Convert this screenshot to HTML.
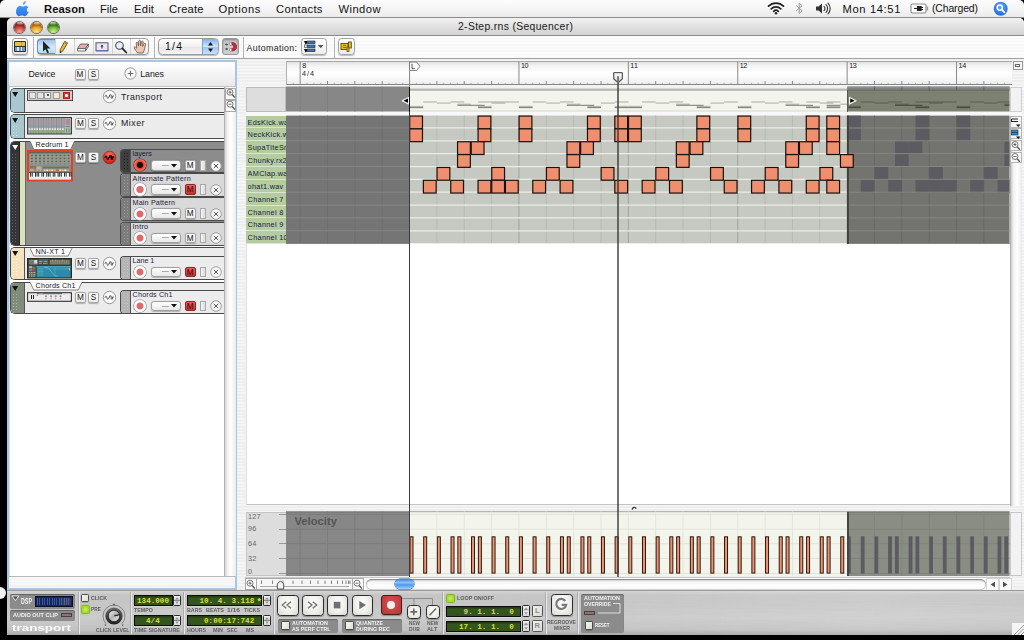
<!DOCTYPE html>
<html><head><meta charset="utf-8"><title>Reason</title><style>
html,body{margin:0;padding:0;}
body{width:1024px;height:640px;overflow:hidden;background:#000;position:relative;font-family:"Liberation Sans",sans-serif;}
#root{position:absolute;left:0;top:0;width:1024px;height:640px;overflow:hidden;}
.t{position:absolute;white-space:nowrap;}
.pin,#win{background:repeating-linear-gradient(#f5f5f5 0,#f5f5f5 1.600px,#eeeeee 1.600px,#eeeeee 3.200px);}
#menubar{position:absolute;left:0;top:0;width:1024px;height:17px;border-radius:5px 5px 0 0;background:linear-gradient(#fdfdfd 0,#f6f6f6 45%,#ebebeb 100%);border-bottom:1px solid #8c8c8c;}
#win{position:absolute;left:7px;top:18px;width:1017px;height:617px;border-radius:5px 5px 0 0;}
#titlebar{position:absolute;left:7px;top:18px;width:1017px;height:16.500px;border-radius:5px 5px 0 0;background:linear-gradient(#f2f2f2 0,#e4e4e4 40%,#d2d2d2 100%);border-bottom:1px solid #8a8a8a;box-sizing:content-box;}
#toolbar{position:absolute;left:7px;top:35.500px;width:1017px;height:22.500px;background:repeating-linear-gradient(#fcfcfc 0,#fcfcfc 1.600px,#f7f7f7 1.600px,#f7f7f7 3.200px);border-bottom:1px solid #a4a4a4;}
#tp{position:absolute;left:7px;top:591px;width:1017px;height:44px;background:linear-gradient(90deg,rgba(255,255,255,0) 55%,rgba(255,255,255,.130) 85%,rgba(255,255,255,.060) 100%),linear-gradient(#d8d8d8 0,#c6c6c6 9%,#c7c7c7 30%,#cdcdcd 60%,#c3c3c3 88%,#a6a6a6 100%);overflow:hidden;}
</style></head><body><div id="root">
<div id="menubar"></div>
<svg style="position:absolute;left:15.600px;top:0.5px" width="14" height="16" viewBox="0 0 14 16">
<defs><linearGradient id="ag" x1="0" y1="0" x2="0" y2="1"><stop offset="0" stop-color="#6ab2fa"/><stop offset="0.5" stop-color="#3b8cf2"/><stop offset="1" stop-color="#2a74e4"/></linearGradient></defs>
<path fill="url(#ag)" d="M9.3 0.4c.1 1-.3 1.9-.9 2.6-.6.7-1.500 1.200-2.400 1.100-.1-.9.400-1.900.900-2.500C7.500.9 8.500.4 9.300.4zM12.400 10.900c-.4 1-.7 1.400-1.200 2.200-.8 1.100-1.800 2.500-3.100 2.500-1.200 0-1.500-.7-3-.7s-1.900.700-3.000.700c-1.300 0-2.300-1.300-3.000-2.400C-2.000 10.000-.100 5.200 2.900 5.000c1.200 0 2 .8 3.100.8 1 0 1.600-.8 3.100-.8 1.100 0 2.300.6 3.100 1.600-2.700 1.500-2.300 5.400.200 4.300z" transform="translate(1.200,-0.300) scale(0.930,1.000)"/></svg>
<div class="t" style="left:44.00px;top:1.52px;font-size:11.20px;line-height:15px;color:#111;letter-spacing:0.108px;font-weight:bold;">Reason</div>
<div class="t" style="left:100.00px;top:1.52px;font-size:11.20px;line-height:15px;color:#111;letter-spacing:-0.016px;">File</div>
<div class="t" style="left:134.00px;top:1.52px;font-size:11.20px;line-height:15px;color:#111;letter-spacing:0.233px;">Edit</div>
<div class="t" style="left:169.00px;top:1.52px;font-size:11.20px;line-height:15px;color:#111;letter-spacing:0.177px;">Create</div>
<div class="t" style="left:218.50px;top:1.52px;font-size:11.20px;line-height:15px;color:#111;letter-spacing:0.567px;">Options</div>
<div class="t" style="left:276.00px;top:1.52px;font-size:11.20px;line-height:15px;color:#111;letter-spacing:0.329px;">Contacts</div>
<div class="t" style="left:338.50px;top:1.52px;font-size:11.20px;line-height:15px;color:#111;letter-spacing:0.433px;">Window</div>
<div class="t" style="left:842.50px;top:1.52px;font-size:11.20px;line-height:15px;color:#111;letter-spacing:0.634px;">Mon 14:51</div>
<div class="t" style="left:932.00px;top:2.00px;font-size:10.40px;line-height:14px;color:#111;letter-spacing:-0.103px;">(Charged)</div>
<svg style="position:absolute;left:767px;top:1px" width="18" height="14" viewBox="0 0 18 14"><g fill="none" stroke="#222" stroke-width="1.700" stroke-linecap="round"><path d="M1.500 5.200a10.500 10.500 0 0 1 15 0"/><path d="M4.200 7.900a6.800 6.800 0 0 1 9.600 0"/><path d="M6.700 10.300a3.300 3.300 0 0 1 4.600 0"/></g><circle cx="9" cy="12.200" r="1.200" fill="#222"/></svg>
<svg style="position:absolute;left:795px;top:2px" width="9" height="13" viewBox="0 0 9 13"><path d="M1.200 3.600l6 5.200-3 2.700V1l3 2.700-6 5.200" fill="none" stroke="#9a9a9a" stroke-width="1"/></svg>
<svg style="position:absolute;left:815px;top:2px" width="17" height="13" viewBox="0 0 17 13"><path d="M1 4.500h2.500L7 1.500v10L3.500 8.500H1z" fill="#333"/><g fill="none" stroke="#333" stroke-width="1.100" stroke-linecap="round"><path d="M9 4.300a3 3 0 0 1 0 4.400"/><path d="M11 2.700a5.300 5.300 0 0 1 0 7.600"/><path d="M13 1.200a7.500 7.500 0 0 1 0 10.600"/></g></svg>
<svg style="position:absolute;left:910px;top:3px" width="19" height="11" viewBox="0 0 19 11"><rect x="1" y="1" width="15" height="9" rx="1.500" fill="#fff" stroke="#8a8a8a" stroke-width="1.100"/><rect x="16.500" y="3.500" width="1.700" height="4" fill="#9a9a9a"/><path d="M4 5.500h3.500M7.500 3.500h3.500v4H7.500zM11 4.500h2M11 6.500h2" stroke="#222" stroke-width="1.200" fill="#222"/></svg>
<svg style="position:absolute;left:993px;top:1px" width="16" height="16" viewBox="0 0 16 16"><defs><radialGradient id="sg" cx="0.5" cy="0.350" r="0.700"><stop offset="0" stop-color="#5fa8ff"/><stop offset="1" stop-color="#1c62dc"/></radialGradient></defs><circle cx="7.700" cy="7.700" r="7" fill="url(#sg)"/><circle cx="6.800" cy="6.600" r="2.600" fill="none" stroke="#fff" stroke-width="1.500"/><path d="M8.800 8.700l2.600 2.700" stroke="#fff" stroke-width="1.800" stroke-linecap="round"/></svg>
<div id="win"></div>
<div id="titlebar"></div>
<div style="position:absolute;left:14.00px;top:21.50px;width:11.00px;height:11.00px;border-radius:50%;background:radial-gradient(ellipse 70% 60% at 50% 88%,#f4a8a0 0%,#c8453c 70%,#8e2a24 100%);box-shadow:0 0 0 0.900px rgba(70,70,70,.800);"><div style="position:absolute;left:2.500px;top:0.600px;width:6px;height:3.200px;border-radius:50%;background:linear-gradient(rgba(255,255,255,.800),rgba(255,255,255,.050))"></div></div>
<div style="position:absolute;left:31.00px;top:21.50px;width:11.00px;height:11.00px;border-radius:50%;background:radial-gradient(ellipse 70% 60% at 50% 88%,#fde68a 0%,#e8a224 70%,#b06a10 100%);box-shadow:0 0 0 0.900px rgba(70,70,70,.800);"><div style="position:absolute;left:2.500px;top:0.600px;width:6px;height:3.200px;border-radius:50%;background:linear-gradient(rgba(255,255,255,.800),rgba(255,255,255,.050))"></div></div>
<div style="position:absolute;left:47.50px;top:21.50px;width:11.00px;height:11.00px;border-radius:50%;background:radial-gradient(ellipse 70% 60% at 50% 88%,#d2f09a 0%,#6cb832 70%,#3e7a18 100%);box-shadow:0 0 0 0.900px rgba(70,70,70,.800);"><div style="position:absolute;left:2.500px;top:0.600px;width:6px;height:3.200px;border-radius:50%;background:linear-gradient(rgba(255,255,255,.800),rgba(255,255,255,.050))"></div></div>
<div class="t" style="left:458.00px;top:20.00px;font-size:10.40px;line-height:14px;color:#1a1a1a;letter-spacing:0.328px;">2-Step.rns (Sequencer)</div>
<div id="toolbar"></div>
<div style="position:absolute;left:0;top:-0.300px;width:0;height:0">
<div style="position:absolute;left:11.50px;top:38.50px;width:16.00px;height:16.50px;border-radius:3px;border:1px solid #9c9c9c;background:linear-gradient(#fff,#e6e6e6);box-sizing:border-box;box-shadow:0 1px 1px rgba(0,0,0,.250);"></div>
<div style="position:absolute;left:13.50px;top:41.00px;width:12.00px;height:11.00px;background:#2e2e2e;border-radius:1px;"></div>
<div style="position:absolute;left:14.50px;top:42.00px;width:10.00px;height:4.00px;background:linear-gradient(90deg,#e8c040 60%,#c8a030 60%,#c8a030 75%,#e8c040 75%);"></div>
<div style="position:absolute;left:14.50px;top:47.00px;width:10.00px;height:4.00px;background:linear-gradient(90deg,#6a98c4 25%,#dde 25%,#dde 40%,#6a98c4 40%,#6a98c4 60%,#dde 60%,#dde 75%,#6a98c4 75%);"></div>
<div style="position:absolute;left:32.50px;top:37.00px;width:1.00px;height:21.00px;background:#b4b4b4;"></div>
<div style="position:absolute;left:36.50px;top:38.50px;width:112.50px;height:16.50px;border-radius:4px;border:1px solid #9c9c9c;background:linear-gradient(#fff,#ececec);box-sizing:border-box;box-shadow:0 1px 1px rgba(0,0,0,.2);"></div>
<div style="position:absolute;left:37.00px;top:39.00px;width:17.50px;height:15.50px;border-radius:3.500px 0 0 3.500px;background:linear-gradient(#9cc4f2,#d6e8fb 55%,#b8d6f6);border:1px solid #6a8fd0;border-right:none;box-sizing:border-box;"></div>
<div style="position:absolute;left:54.50px;top:39.50px;width:1.00px;height:14.50px;background:#d4d4d4;"></div>
<div style="position:absolute;left:73.50px;top:39.50px;width:1.00px;height:14.50px;background:#d4d4d4;"></div>
<div style="position:absolute;left:92.50px;top:39.50px;width:1.00px;height:14.50px;background:#d4d4d4;"></div>
<div style="position:absolute;left:111.50px;top:39.50px;width:1.00px;height:14.50px;background:#d4d4d4;"></div>
<div style="position:absolute;left:130.00px;top:39.50px;width:1.00px;height:14.50px;background:#d4d4d4;"></div>
<svg style="position:absolute;left:41px;top:40px" width="12" height="14" viewBox="0 0 12 14"><path d="M2 1l7.500 7.500H6l2 4-1.600.8-2-4L2 11.500z" fill="#222"/></svg>
<svg style="position:absolute;left:58px;top:40px" width="12" height="14" viewBox="0 0 12 14"><path d="M6.800 1.300l2.800 1.600-4.700 8-2.800 1.900.200-3.400z" fill="#e6c034" stroke="#4a3a10" stroke-width=".8" stroke-linejoin="round"/><path d="M6.800 1.300l2.800 1.600-.9 1.500-2.800-1.600z" fill="#b47c50"/><path d="M2.100 12.800l.1-1.700 1.300.8z" fill="#222"/></svg>
<svg style="position:absolute;left:76px;top:41px" width="14" height="12" viewBox="0 0 14 12"><path d="M1.500 7.500l3-4.500h8l-3 4.500z" fill="#e8a8b0" stroke="#555" stroke-width=".8"/><path d="M1.500 7.500h8v2.500h-8z" fill="#f4f4f4" stroke="#555" stroke-width=".8"/><path d="M9.500 7.500l3-4.500v2.500l-3 4.500z" fill="#ccc" stroke="#555" stroke-width=".8"/></svg>
<svg style="position:absolute;left:95px;top:41px" width="14" height="12" viewBox="0 0 14 12"><rect x="1" y="1.800" width="12" height="8" fill="#e8e8f4" stroke="#556" stroke-width="1"/><path d="M1 9.800h12" stroke="#6a6ac0" stroke-width="1"/><path d="M7 3.500l1.500 2H5.500z M6.500 5.500h1v2h-1z" fill="#223"/></svg>
<svg style="position:absolute;left:114px;top:40px" width="14" height="14" viewBox="0 0 14 14"><circle cx="5.500" cy="5.500" r="3.800" fill="#e8f0ff" stroke="#445" stroke-width="1.100"/><path d="M8.300 8.300l4 4.200" stroke="#223" stroke-width="1.800" stroke-linecap="round"/></svg>
<svg style="position:absolute;left:132.500px;top:39px" width="15" height="15" viewBox="0 0 15 15"><path d="M4.500 14C3.500 12 1.500 10.500 1 8.500 1.500 7.500 2.800 8 3.800 9.200L3.200 4.200C3.200 3 4.800 3 5 4.200L5.600 7V2.200C5.800 1 7.300 1 7.400 2.200L7.600 6.800 8.600 2.600C9 1.500 10.400 1.900 10.200 3.100L9.600 7.400 11.200 4.600C11.800 3.700 13 4.300 12.600 5.400 11.600 8.500 11.800 11 10 14Z" fill="#eac8b4" stroke="#6a5044" stroke-width=".8" stroke-linejoin="round"/></svg>
<div style="position:absolute;left:153.50px;top:37.00px;width:1.00px;height:21.00px;background:#b4b4b4;"></div>
<div style="position:absolute;left:157.50px;top:38.50px;width:61.00px;height:16.50px;border-radius:4.500px;border:1px solid #9a9a9a;background:linear-gradient(#fff,#f0f0f0 50%,#e4e4e4 51%,#f4f4f4);box-sizing:border-box;box-shadow:0 1px 1px rgba(0,0,0,.250);"></div>
<div style="position:absolute;left:202.00px;top:39.00px;width:16.00px;height:15.50px;border-radius:0 4px 4px 0;background:linear-gradient(#7fb0ee,#cfe3fa 50%,#9dc5f4 52%,#c8e0fb);border-left:1px solid #7da0d8;box-sizing:border-box;"></div>
<svg style="position:absolute;left:207px;top:41px" width="7" height="12" viewBox="0 0 7 12"><path d="M3.500 1l2.500 3.500H1zM3.500 11L1 7.500h5z" fill="#111"/></svg>
<div class="t" style="left:165.00px;top:40.00px;font-size:10.40px;line-height:14px;color:#111;letter-spacing:1.271px;">1/4</div>
<div style="position:absolute;left:222.00px;top:38.50px;width:16.50px;height:16.50px;border-radius:3px;border:1px solid #999;background:linear-gradient(#c2c2c2,#d2d2d2);box-sizing:border-box;box-shadow:inset 0 1px 2px rgba(0,0,0,.3);"></div>
<svg style="position:absolute;left:224px;top:41px" width="13" height="12" viewBox="0 0 13 12"><path d="M6 1.500h2.500a4.200 4.200 0 0 1 0 8.500H6V7.500h2.300a1.800 1.800 0 0 0 0-3.500H6z" fill="#c8283c" stroke="#601020" stroke-width=".5"/><path d="M6 1.500h1.500V4H6zM6 7.500h1.500V10H6z" fill="#eee"/><path d="M1 3.500h3M1 8h3M2 2.500l1.500 1-1.500 1M2 7l1.500 1-1.500 1" stroke="#444" stroke-width=".8" fill="none"/></svg>
<div style="position:absolute;left:243.00px;top:37.00px;width:1.00px;height:21.00px;background:#b4b4b4;"></div>
<div class="t" style="left:246.50px;top:42.85px;font-size:8.80px;line-height:11px;color:#1a1a2a;letter-spacing:0.354px;">Automation:</div>
<div style="position:absolute;left:300.50px;top:38.50px;width:26.50px;height:16.50px;border-radius:3.500px;border:1px solid #a4a4a4;background:linear-gradient(#fff,#ececec);box-sizing:border-box;box-shadow:0 1px 1px rgba(0,0,0,.250);"></div>
<svg style="position:absolute;left:303px;top:40.500px" width="22" height="13" viewBox="0 0 22 13"><g fill="#3a78b8" stroke="#123" stroke-width=".6"><rect x="4.500" y="1" width="7.500" height="2.600"/><rect x="4.500" y="5" width="7.500" height="2.600"/><rect x="4.500" y="9" width="7.500" height="2.600"/></g><path d="M1 1h3v2.500l-1.500 1zM1 9h3v2.500l-1.500 1z" fill="#111"/><rect x="1.500" y="5" width="2.500" height="2.600" fill="#fff" stroke="#333" stroke-width=".6"/><path d="M15 5h5.500l-2.750 3.200z" fill="#555"/></svg>
<div style="position:absolute;left:333.50px;top:37.00px;width:1.00px;height:21.00px;background:#b4b4b4;"></div>
<div style="position:absolute;left:338.00px;top:38.50px;width:16.50px;height:16.50px;border-radius:3.500px;border:1px solid #a4a4a4;background:linear-gradient(#fff,#ececec);box-sizing:border-box;box-shadow:0 1px 1px rgba(0,0,0,.250);"></div>
<svg style="position:absolute;left:340px;top:41px" width="13" height="12" viewBox="0 0 13 12"><rect x="1" y="2.500" width="7" height="6" fill="#e8c030" stroke="#5a4a10" stroke-width=".9"/><rect x="8.500" y="1" width="2.800" height="6" fill="#e8c030" stroke="#5a4a10" stroke-width=".9"/><rect x="7" y="6" width="2" height="4.500" fill="#e8c030" stroke="#5a4a10" stroke-width=".8"/><path d="M3 4.500h3M3 6.500h3" stroke="#5a4a10" stroke-width=".7"/></svg>
</div>
<div style="position:absolute;left:7.20px;top:60.20px;width:230.30px;height:529.80px;box-sizing:border-box;border:2px solid #a7c6e6;background:#fff;box-shadow:inset 0 0 0 1px #d5e3f2;"></div>
<div style="position:absolute;left:9.20px;top:62.00px;width:226.30px;height:24.50px;background:linear-gradient(#ffffff,#f4f4f4 50%,#e9e9e9);border-bottom:1px solid #c4c4c4;box-sizing:border-box;"></div>
<div class="t" style="left:28.50px;top:69.45px;font-size:8.80px;line-height:11px;color:#1a1a1a;letter-spacing:0.020px;">Device</div>
<div style="position:absolute;left:74.50px;top:68.50px;width:11.00px;height:11.00px;border-radius:2px;border:1px solid #a6a6a6;background:linear-gradient(#ffffff,#ececec);box-sizing:border-box;box-shadow:0 .5px 1px rgba(0,0,0,.250);"><div style="position:absolute;left:0;right:0;top:0;bottom:0;text-align:center;font-size:8.2px;line-height:9.8px;color:#111;">M</div></div>
<div style="position:absolute;left:88.00px;top:68.50px;width:11.00px;height:11.00px;border-radius:2px;border:1px solid #a6a6a6;background:linear-gradient(#ffffff,#ececec);box-sizing:border-box;box-shadow:0 .5px 1px rgba(0,0,0,.250);"><div style="position:absolute;left:0;right:0;top:0;bottom:0;text-align:center;font-size:8.2px;line-height:9.8px;color:#111;">S</div></div>
<svg style="position:absolute;left:123.500px;top:67px" width="13" height="13" viewBox="0 0 13 13"><circle cx="6.500" cy="6.500" r="5.600" fill="#fbfbfb" stroke="#8c8c8c" stroke-width=".9"/><path d="M6.500 3.700v5.600M3.700 6.500h5.600" stroke="#666" stroke-width="1.100"/></svg>
<div class="t" style="left:140.30px;top:69.45px;font-size:8.80px;line-height:11px;color:#1a1a1a;letter-spacing:-0.069px;">Lanes</div>
<div style="position:absolute;left:224.00px;top:87.00px;width:12.00px;height:489.00px;background:linear-gradient(90deg,#d4d4d4 0,#f4f4f4 25%,#ffffff 55%,#ececec 100%);border-left:1px solid #b0b0b0;box-sizing:border-box;"></div>
<div style="position:absolute;left:224.50px;top:87.50px;width:11.00px;height:12.00px;background:#f8f8f8;border:1px solid #aaa;box-sizing:border-box;"></div>
<svg style="position:absolute;left:225.500px;top:88.0px" width="10" height="11" viewBox="0 0 10 11"><circle cx="4" cy="4.200" r="3" fill="#fff" stroke="#555" stroke-width=".8"/><path d="M6.200 6.500l2.600 3" stroke="#555" stroke-width="1.300"/><path d="M2.500 4.200h3M4 2.700v3" stroke="#444" stroke-width=".8"/></svg>
<div style="position:absolute;left:224.50px;top:99.50px;width:11.00px;height:12.00px;background:#f8f8f8;border:1px solid #aaa;box-sizing:border-box;"></div>
<svg style="position:absolute;left:225.500px;top:100.0px" width="10" height="11" viewBox="0 0 10 11"><circle cx="4" cy="4.200" r="3" fill="#fff" stroke="#555" stroke-width=".8"/><path d="M6.200 6.500l2.600 3" stroke="#555" stroke-width="1.300"/><path d="M2.500 4.200h3" stroke="#444" stroke-width=".8"/></svg>
<div style="position:absolute;left:9.20px;top:576.00px;width:226.30px;height:12.00px;border-top:1px solid #b8b8b8;box-sizing:border-box;background:repeating-linear-gradient(#f8f8f8 0,#f8f8f8 1.600px,#f2f2f2 1.600px,#f2f2f2 3.200px);"></div>
<div style="position:absolute;left:9.60px;top:88.00px;width:214.40px;height:24.50px;box-sizing:border-box;border:1px solid #484848;border-right:none;border-radius:5px 0 0 5px;background:#ececec;overflow:hidden;"><div style="position:absolute;left:0;top:0;bottom:0;width:13px;background:#a8c7ce;border-right:1px solid #555;"></div></div>
<svg style="position:absolute;left:11.9px;top:92.1px" width="7" height="6" viewBox="0 0 7 6"><path d="M0.200 0h6L3.200 4.900z" fill="#111"/></svg>
<div style="position:absolute;left:27.00px;top:90.00px;width:45.50px;height:10.50px;background:#cfcfcf;border:1px solid #4a4a4a;box-sizing:border-box;"></div>
<div style="position:absolute;left:29.00px;top:91.80px;width:7.00px;height:7.00px;background:#e4e4e4;border:1px solid #9a9a9a;box-sizing:border-box;"></div>
<div style="position:absolute;left:36.70px;top:91.80px;width:7.00px;height:7.00px;background:#e4e4e4;border:1px solid #9a9a9a;box-sizing:border-box;"></div>
<div style="position:absolute;left:44.40px;top:91.80px;width:7.00px;height:7.00px;background:#ececec;border:1px solid #9a9a9a;box-sizing:border-box;"></div>
<div style="position:absolute;left:52.60px;top:91.80px;width:7.00px;height:7.00px;background:#f6ecc6;border:1px solid #9a9a9a;box-sizing:border-box;"></div>
<div style="position:absolute;left:62.80px;top:91.80px;width:7.00px;height:7.00px;background:#e83a28;border:1px solid #b02010;box-sizing:border-box;"></div>
<div style="position:absolute;left:65.10px;top:94.10px;width:2.50px;height:2.50px;background:#fff;border-radius:50%;"></div>
<div style="position:absolute;left:46.90px;top:94.30px;width:2.00px;height:2.00px;background:#555;"></div>
<svg style="position:absolute;left:101.5px;top:88.5px" width="15" height="15" viewBox="0 0 15 15"><circle cx="7.500" cy="7.500" r="6.200" fill="#fbfbfb" stroke="#8c8c8c" stroke-width=".9"/><path d="M3 8C3.500 5.400 4.500 5.400 5 8 5.400 10.100 6.300 10.100 6.800 7.600H7.600V5.900H9.200V9.100H10.500V7H12" fill="none" stroke="#555" stroke-width=".9"/></svg>
<div class="t" style="left:121.00px;top:92.05px;font-size:8.80px;line-height:11px;color:#1a1a2a;letter-spacing:0.458px;">Transport</div>
<div style="position:absolute;left:9.60px;top:114.00px;width:214.40px;height:24.50px;box-sizing:border-box;border:1px solid #484848;border-right:none;border-radius:5px 0 0 5px;background:#ececec;overflow:hidden;"><div style="position:absolute;left:0;top:0;bottom:0;width:13px;background:#a8c7ce;border-right:1px solid #555;"></div></div>
<svg style="position:absolute;left:11.9px;top:118.2px" width="7" height="6" viewBox="0 0 7 6"><path d="M0.200 0h6L3.200 4.900z" fill="#111"/></svg>
<div style="position:absolute;left:12.20px;top:125.00px;width:6.00px;height:11.00px;background-image:radial-gradient(circle,rgba(255,255,255,.450) 0.700px,transparent 1px);background-size:3px 3px;"></div>
<svg style="position:absolute;left:27px;top:117px" width="45" height="17.5" viewBox="0 0 45 17.5"><rect x=".5" y=".5" width="44" height="16.5" fill="#868c92" stroke="#3c4044" stroke-width="1"/><rect x="1.70" y="1.200" width="1.700" height="15" fill="#a6acb2"/><rect x="1.90" y="2" width="1.300" height="4.800" fill="#b39494" opacity=".8"/><rect x="1.90" y="7.500" width="1.300" height="3" fill="#8e98a6" opacity=".9"/><rect x="1.70" y="11.300" width="1.700" height="1.800" fill="#e6e8e6"/><rect x="2.00" y="13.100" width="1.100" height="2.800" fill="#7cb858" opacity=".85"/><rect x="4.26" y="1.200" width="1.700" height="15" fill="#a6acb2"/><rect x="4.46" y="2" width="1.300" height="4.800" fill="#b39494" opacity=".8"/><rect x="4.46" y="7.500" width="1.300" height="3" fill="#8e98a6" opacity=".9"/><rect x="4.26" y="11.300" width="1.700" height="1.800" fill="#e6e8e6"/><rect x="4.56" y="13.100" width="1.100" height="2.800" fill="#7cb858" opacity=".85"/><rect x="6.82" y="1.200" width="1.700" height="15" fill="#a6acb2"/><rect x="7.02" y="2" width="1.300" height="4.800" fill="#b39494" opacity=".8"/><rect x="7.02" y="7.500" width="1.300" height="3" fill="#8e98a6" opacity=".9"/><rect x="6.82" y="11.300" width="1.700" height="1.800" fill="#e6e8e6"/><rect x="7.12" y="13.100" width="1.100" height="2.800" fill="#7cb858" opacity=".85"/><rect x="9.38" y="1.200" width="1.700" height="15" fill="#a6acb2"/><rect x="9.58" y="2" width="1.300" height="4.800" fill="#b39494" opacity=".8"/><rect x="9.58" y="7.500" width="1.300" height="3" fill="#8e98a6" opacity=".9"/><rect x="9.38" y="11.300" width="1.700" height="1.800" fill="#e6e8e6"/><rect x="9.68" y="13.100" width="1.100" height="2.800" fill="#7cb858" opacity=".85"/><rect x="11.94" y="1.200" width="1.700" height="15" fill="#a6acb2"/><rect x="12.14" y="2" width="1.300" height="4.800" fill="#b39494" opacity=".8"/><rect x="12.14" y="7.500" width="1.300" height="3" fill="#8e98a6" opacity=".9"/><rect x="11.94" y="11.300" width="1.700" height="1.800" fill="#e6e8e6"/><rect x="12.24" y="13.100" width="1.100" height="2.800" fill="#7cb858" opacity=".85"/><rect x="14.50" y="1.200" width="1.700" height="15" fill="#a6acb2"/><rect x="14.70" y="2" width="1.300" height="4.800" fill="#b39494" opacity=".8"/><rect x="14.70" y="7.500" width="1.300" height="3" fill="#8e98a6" opacity=".9"/><rect x="14.50" y="11.300" width="1.700" height="1.800" fill="#e6e8e6"/><rect x="14.80" y="13.100" width="1.100" height="2.800" fill="#7cb858" opacity=".85"/><rect x="17.06" y="1.200" width="1.700" height="15" fill="#a6acb2"/><rect x="17.26" y="2" width="1.300" height="4.800" fill="#b39494" opacity=".8"/><rect x="17.26" y="7.500" width="1.300" height="3" fill="#8e98a6" opacity=".9"/><rect x="17.06" y="11.300" width="1.700" height="1.800" fill="#e6e8e6"/><rect x="17.36" y="13.100" width="1.100" height="2.800" fill="#7cb858" opacity=".85"/><rect x="19.62" y="1.200" width="1.700" height="15" fill="#a6acb2"/><rect x="19.82" y="2" width="1.300" height="4.800" fill="#b39494" opacity=".8"/><rect x="19.82" y="7.500" width="1.300" height="3" fill="#8e98a6" opacity=".9"/><rect x="19.62" y="11.300" width="1.700" height="1.800" fill="#e6e8e6"/><rect x="19.92" y="13.100" width="1.100" height="2.800" fill="#7cb858" opacity=".85"/><rect x="22.18" y="1.200" width="1.700" height="15" fill="#a6acb2"/><rect x="22.38" y="2" width="1.300" height="4.800" fill="#b39494" opacity=".8"/><rect x="22.38" y="7.500" width="1.300" height="3" fill="#8e98a6" opacity=".9"/><rect x="22.18" y="11.300" width="1.700" height="1.800" fill="#e6e8e6"/><rect x="22.48" y="13.100" width="1.100" height="2.800" fill="#7cb858" opacity=".85"/><rect x="24.74" y="1.200" width="1.700" height="15" fill="#a6acb2"/><rect x="24.94" y="2" width="1.300" height="4.800" fill="#b39494" opacity=".8"/><rect x="24.94" y="7.500" width="1.300" height="3" fill="#8e98a6" opacity=".9"/><rect x="24.74" y="11.300" width="1.700" height="1.800" fill="#e6e8e6"/><rect x="25.04" y="13.100" width="1.100" height="2.800" fill="#7cb858" opacity=".85"/><rect x="27.30" y="1.200" width="1.700" height="15" fill="#a6acb2"/><rect x="27.50" y="2" width="1.300" height="4.800" fill="#b39494" opacity=".8"/><rect x="27.50" y="7.500" width="1.300" height="3" fill="#8e98a6" opacity=".9"/><rect x="27.30" y="11.300" width="1.700" height="1.800" fill="#e6e8e6"/><rect x="27.60" y="13.100" width="1.100" height="2.800" fill="#7cb858" opacity=".85"/><rect x="29.86" y="1.200" width="1.700" height="15" fill="#a6acb2"/><rect x="30.06" y="2" width="1.300" height="4.800" fill="#b39494" opacity=".8"/><rect x="30.06" y="7.500" width="1.300" height="3" fill="#8e98a6" opacity=".9"/><rect x="29.86" y="11.300" width="1.700" height="1.800" fill="#e6e8e6"/><rect x="30.16" y="13.100" width="1.100" height="2.800" fill="#7cb858" opacity=".85"/><rect x="32.42" y="1.200" width="1.700" height="15" fill="#a6acb2"/><rect x="32.62" y="2" width="1.300" height="4.800" fill="#b39494" opacity=".8"/><rect x="32.62" y="7.500" width="1.300" height="3" fill="#8e98a6" opacity=".9"/><rect x="32.42" y="11.300" width="1.700" height="1.800" fill="#e6e8e6"/><rect x="32.72" y="13.100" width="1.100" height="2.800" fill="#7cb858" opacity=".85"/><rect x="34.98" y="1.200" width="1.700" height="15" fill="#a6acb2"/><rect x="35.18" y="2" width="1.300" height="4.800" fill="#b39494" opacity=".8"/><rect x="35.18" y="7.500" width="1.300" height="3" fill="#8e98a6" opacity=".9"/><rect x="34.98" y="11.300" width="1.700" height="1.800" fill="#e6e8e6"/><rect x="35.28" y="13.100" width="1.100" height="2.800" fill="#7cb858" opacity=".85"/><rect x="37.600" y="1.200" width="6.200" height="15" fill="#b4b8bc"/><path d="M38.500 3h4.500M38.500 5h4.500M38.500 7h4.500" stroke="#a85858" stroke-width=".9"/><path d="M38.500 9.500h4.500" stroke="#666" stroke-width=".8"/><rect x="39" y="11.500" width="1.200" height="4.200" fill="#58a838"/><rect x="41.500" y="11.500" width="1.200" height="4.200" fill="#58a838"/></svg>
<div style="position:absolute;left:75.00px;top:117.50px;width:11.00px;height:11.00px;border-radius:2px;border:1px solid #a6a6a6;background:linear-gradient(#ffffff,#ececec);box-sizing:border-box;box-shadow:0 .5px 1px rgba(0,0,0,.250);"><div style="position:absolute;left:0;right:0;top:0;bottom:0;text-align:center;font-size:8.2px;line-height:9.8px;color:#111;">M</div></div>
<div style="position:absolute;left:88.00px;top:117.50px;width:11.00px;height:11.00px;border-radius:2px;border:1px solid #a6a6a6;background:linear-gradient(#ffffff,#ececec);box-sizing:border-box;box-shadow:0 .5px 1px rgba(0,0,0,.250);"><div style="position:absolute;left:0;right:0;top:0;bottom:0;text-align:center;font-size:8.2px;line-height:9.8px;color:#111;">S</div></div>
<svg style="position:absolute;left:101.5px;top:116.0px" width="15" height="15" viewBox="0 0 15 15"><circle cx="7.500" cy="7.500" r="6.200" fill="#fbfbfb" stroke="#8c8c8c" stroke-width=".9"/><path d="M3 8C3.500 5.400 4.500 5.400 5 8 5.400 10.100 6.300 10.100 6.800 7.600H7.600V5.900H9.200V9.100H10.500V7H12" fill="none" stroke="#555" stroke-width=".9"/></svg>
<div class="t" style="left:121.00px;top:118.15px;font-size:8.80px;line-height:11px;color:#1a1a2a;letter-spacing:0.497px;">Mixer</div>
<div style="position:absolute;left:9.60px;top:140.50px;width:214.40px;height:105.00px;box-sizing:border-box;border:1px solid #484848;border-right:none;border-radius:5px 0 0 5px;background:#8c8c8c;overflow:hidden;"><div style="position:absolute;left:0;top:0;bottom:0;width:8.500px;background:#353535;"></div><div style="position:absolute;left:8.500px;top:0;bottom:0;width:4.500px;background:#d9e2bd;border-right:1px solid #666;border-left:1px solid #222"></div></div>
<svg style="position:absolute;left:11.9px;top:144.7px" width="7" height="6" viewBox="0 0 7 6"><path d="M0.200 0h6L3.200 4.900z" fill="#fff"/></svg>
<div style="position:absolute;left:11.40px;top:153.00px;width:6.00px;height:90.00px;background-image:radial-gradient(circle,rgba(255,255,255,.220) 0.700px,transparent 1px);background-size:3px 3px;"></div>
<svg style="position:absolute;left:30.0px;top:141.0px" width="45.5" height="9.5"><path d="M0 0L3.8 8.5H40.7L44.5 0z" fill="#fff" stroke="#666" stroke-width=".8"/><path d="M0.500 0H44.0" stroke="#fff" stroke-width="1.600"/></svg><div class="t" style="left:35.60px;top:140.31px;font-size:7.20px;line-height:9px;color:#14142c;letter-spacing:0.198px;">Redrum 1</div>
<svg style="position:absolute;left:26.500px;top:150px" width="46" height="31.5" viewBox="0 0 46 31.5"><rect x="1" y="1" width="44" height="29.500" fill="#8c9286" stroke="#e04028" stroke-width="2"/><rect x="2" y="2" width="42" height="1.600" fill="#5e645a"/><rect x="3.20" y="3.600" width="3.300" height="11.800" fill="#a2a89a"/><rect x="3.80" y="4.6" width="2.100" height="1.700" fill="#5c6258"/><rect x="3.80" y="7.6" width="2.100" height="1.700" fill="#5c6258"/><rect x="3.80" y="10.6" width="2.100" height="1.700" fill="#5c6258"/><rect x="3.60" y="13.300" width="2.500" height="1.300" fill="#6a7a8a"/><rect x="7.28" y="3.600" width="3.300" height="11.800" fill="#a2a89a"/><rect x="7.88" y="4.6" width="2.100" height="1.700" fill="#5c6258"/><rect x="7.88" y="7.6" width="2.100" height="1.700" fill="#5c6258"/><rect x="7.88" y="10.6" width="2.100" height="1.700" fill="#5c6258"/><rect x="7.68" y="13.300" width="2.500" height="1.300" fill="#6a7a8a"/><rect x="11.36" y="3.600" width="3.300" height="11.800" fill="#a2a89a"/><rect x="11.96" y="4.6" width="2.100" height="1.700" fill="#5c6258"/><rect x="11.96" y="7.6" width="2.100" height="1.700" fill="#5c6258"/><rect x="11.96" y="10.6" width="2.100" height="1.700" fill="#5c6258"/><rect x="11.76" y="13.300" width="2.500" height="1.300" fill="#6a7a8a"/><rect x="15.44" y="3.600" width="3.300" height="11.800" fill="#a2a89a"/><rect x="16.04" y="4.6" width="2.100" height="1.700" fill="#5c6258"/><rect x="16.04" y="7.6" width="2.100" height="1.700" fill="#5c6258"/><rect x="16.04" y="10.6" width="2.100" height="1.700" fill="#5c6258"/><rect x="15.84" y="13.300" width="2.500" height="1.300" fill="#6a7a8a"/><rect x="19.52" y="3.600" width="3.300" height="11.800" fill="#a2a89a"/><rect x="20.12" y="4.6" width="2.100" height="1.700" fill="#5c6258"/><rect x="20.12" y="7.6" width="2.100" height="1.700" fill="#5c6258"/><rect x="20.12" y="10.6" width="2.100" height="1.700" fill="#5c6258"/><rect x="19.92" y="13.300" width="2.500" height="1.300" fill="#6a7a8a"/><rect x="23.60" y="3.600" width="3.300" height="11.800" fill="#a2a89a"/><rect x="24.20" y="4.6" width="2.100" height="1.700" fill="#5c6258"/><rect x="24.20" y="7.6" width="2.100" height="1.700" fill="#5c6258"/><rect x="24.20" y="10.6" width="2.100" height="1.700" fill="#5c6258"/><rect x="24.00" y="13.300" width="2.500" height="1.300" fill="#6a7a8a"/><rect x="27.68" y="3.600" width="3.300" height="11.800" fill="#a2a89a"/><rect x="28.28" y="4.6" width="2.100" height="1.700" fill="#5c6258"/><rect x="28.28" y="7.6" width="2.100" height="1.700" fill="#5c6258"/><rect x="28.28" y="10.6" width="2.100" height="1.700" fill="#5c6258"/><rect x="28.08" y="13.300" width="2.500" height="1.300" fill="#6a7a8a"/><rect x="31.76" y="3.600" width="3.300" height="11.800" fill="#a2a89a"/><rect x="32.36" y="4.6" width="2.100" height="1.700" fill="#5c6258"/><rect x="32.36" y="7.6" width="2.100" height="1.700" fill="#5c6258"/><rect x="32.36" y="10.6" width="2.100" height="1.700" fill="#5c6258"/><rect x="32.16" y="13.300" width="2.500" height="1.300" fill="#6a7a8a"/><rect x="35.84" y="3.600" width="3.300" height="11.800" fill="#a2a89a"/><rect x="36.44" y="4.6" width="2.100" height="1.700" fill="#5c6258"/><rect x="36.44" y="7.6" width="2.100" height="1.700" fill="#5c6258"/><rect x="36.44" y="10.6" width="2.100" height="1.700" fill="#5c6258"/><rect x="36.24" y="13.300" width="2.500" height="1.300" fill="#6a7a8a"/><rect x="39.92" y="3.600" width="3.300" height="11.800" fill="#a2a89a"/><rect x="40.52" y="4.6" width="2.100" height="1.700" fill="#5c6258"/><rect x="40.52" y="7.6" width="2.100" height="1.700" fill="#5c6258"/><rect x="40.52" y="10.6" width="2.100" height="1.700" fill="#5c6258"/><rect x="40.32" y="13.300" width="2.500" height="1.300" fill="#6a7a8a"/><rect x="2" y="15.400" width="42" height="6.400" fill="#8a8c80"/><rect x="3" y="16" width="6" height="2.600" fill="#a86a44"/><rect x="3" y="18.800" width="4" height="2.400" fill="#b0a890"/><rect x="9.500" y="16.500" width="5" height="4.500" fill="#b4b4ac"/><rect x="11" y="19.500" width="2" height="1.800" fill="#d08850"/><path d="M16 17.500h26" stroke="#6e7268" stroke-width="1.600"/><rect x="16.50" y="19.400" width="2" height="1.600" fill="#e8d8a0"/><rect x="19.10" y="19.400" width="2" height="1.600" fill="#f2f0e0"/><rect x="21.70" y="19.400" width="2" height="1.600" fill="#e8c070"/><rect x="24.30" y="19.400" width="2" height="1.600" fill="#f0e8d0"/><rect x="26.90" y="19.400" width="2" height="1.600" fill="#e8b060"/><rect x="29.50" y="19.400" width="2" height="1.600" fill="#e86048"/><rect x="32.10" y="19.400" width="2" height="1.600" fill="#f0e0c0"/><rect x="34.70" y="19.400" width="2" height="1.600" fill="#e8c888"/><rect x="37.30" y="19.400" width="2" height="1.600" fill="#f0f0e0"/><rect x="39.90" y="19.400" width="2" height="1.600" fill="#e8a860"/><rect x="2" y="21.800" width="42" height="7.700" fill="#fbfbfb"/><rect x="2" y="21.800" width="42" height=".9" fill="#222"/><path d="M3.62 22.500v4.200M5.23 22.500v4.200M8.46 22.500v4.200M10.08 22.500v4.200M11.69 22.500v4.200M14.92 22.500v4.200M16.54 22.500v4.200M19.77 22.500v4.200M21.38 22.500v4.200M23.00 22.500v4.200M26.23 22.500v4.200M27.85 22.500v4.200M31.08 22.500v4.200M32.69 22.500v4.200M34.31 22.500v4.200M37.54 22.500v4.200M39.15 22.500v4.200M42.38 22.500v4.200M44.00 22.500v4.200" stroke="#1a1a1a" stroke-width=".95"/><path d="M3.62 26.700v2.800M5.23 26.700v2.800M6.85 26.700v2.800M8.46 26.700v2.800M10.08 26.700v2.800M11.69 26.700v2.800M13.31 26.700v2.800M14.92 26.700v2.800M16.54 26.700v2.800M18.15 26.700v2.800M19.77 26.700v2.800M21.38 26.700v2.800M23.00 26.700v2.800M24.62 26.700v2.800M26.23 26.700v2.800M27.85 26.700v2.800M29.46 26.700v2.800M31.08 26.700v2.800M32.69 26.700v2.800M34.31 26.700v2.800M35.92 26.700v2.800M37.54 26.700v2.800M39.15 26.700v2.800M40.77 26.700v2.800M42.38 26.700v2.800" stroke="#bbb" stroke-width=".4"/></svg>
<div style="position:absolute;left:75.00px;top:151.50px;width:11.00px;height:11.00px;border-radius:2px;border:1px solid #a6a6a6;background:linear-gradient(#ffffff,#ececec);box-sizing:border-box;box-shadow:0 .5px 1px rgba(0,0,0,.250);"><div style="position:absolute;left:0;right:0;top:0;bottom:0;text-align:center;font-size:8.2px;line-height:9.8px;color:#111;">M</div></div>
<div style="position:absolute;left:88.00px;top:151.50px;width:11.00px;height:11.00px;border-radius:2px;border:1px solid #a6a6a6;background:linear-gradient(#ffffff,#ececec);box-sizing:border-box;box-shadow:0 .5px 1px rgba(0,0,0,.250);"><div style="position:absolute;left:0;right:0;top:0;bottom:0;text-align:center;font-size:8.2px;line-height:9.8px;color:#111;">S</div></div>
<svg style="position:absolute;left:101.5px;top:150.0px" width="15" height="15" viewBox="0 0 15 15"><defs><radialGradient id="rg1" cx=".5" cy=".3" r=".7"><stop offset="0" stop-color="#ff7060"/><stop offset="1" stop-color="#c81808"/></radialGradient></defs><circle cx="7.500" cy="7.500" r="6.300" fill="url(#rg1)" stroke="#8a1a10" stroke-width=".6"/><path d="M3 8C3.500 5.400 4.500 5.400 5 8 5.400 10.100 6.300 10.100 6.800 7.600H7.600V5.900H9.200V9.100H10.500V7H12" fill="none" stroke="#200" stroke-width="1.300"/></svg>
<div style="position:absolute;left:120.00px;top:149.00px;width:104.00px;height:24.00px;box-sizing:border-box;border:1px solid #4a4a4a;border-right:none;border-radius:4px 0 0 4px;background:#8c8c8c;overflow:hidden;"><div style="position:absolute;left:0;top:0;bottom:0;width:9px;background:#3e3e3e;border-right:1px solid #555;"></div></div>
<div style="position:absolute;left:122.50px;top:152.00px;width:6.00px;height:18.00px;background-image:radial-gradient(circle,rgba(0,0,0,.5) 0.700px,transparent 1px);background-size:3px 3px;"></div>
<div class="t" style="left:132.60px;top:149.41px;font-size:7.20px;line-height:9px;color:#1c1c3c;letter-spacing:-0.001px;">layers</div>
<div style="position:absolute;left:134.00px;top:159.10px;width:12.40px;height:12.40px;border-radius:50%;background:radial-gradient(circle,#111 0,#111 32%,#e03828 40%,#ff6a50 62%,#c02818 100%);box-shadow:0 0 0 .6px #7a1a10;"></div>
<div style="position:absolute;left:151.00px;top:160.00px;width:29.50px;height:10.50px;border-radius:3px;border:1px solid #a0a0a0;background:linear-gradient(#fff,#e8e8e8);box-sizing:border-box;box-shadow:0 .5px 1px rgba(0,0,0,.250);"></div>
<div style="position:absolute;left:162.00px;top:164.80px;width:6.50px;height:1.00px;background:#aaa;"></div>
<svg style="position:absolute;left:171px;top:163.6px" width="6" height="4" viewBox="0 0 6 4"><path d="M0 0h6L3 3.600z" fill="#111"/></svg>
<div style="position:absolute;left:185.00px;top:160.00px;width:10.50px;height:10.50px;border-radius:2px;border:1px solid #a6a6a6;background:linear-gradient(#ffffff,#ececec);box-sizing:border-box;box-shadow:0 .5px 1px rgba(0,0,0,.250);"><div style="position:absolute;left:0;right:0;top:0;bottom:0;text-align:center;font-size:8.2px;line-height:9.3px;color:#111;">M</div></div>
<div style="position:absolute;left:199.50px;top:160.00px;width:6.00px;height:10.50px;border:1px solid #a8a8a8;background:linear-gradient(90deg,#f4f4f4,#dcdcdc);box-sizing:border-box;"></div>
<svg style="position:absolute;left:209.500px;top:159.6px" width="12" height="12" viewBox="0 0 12 12"><circle cx="6" cy="6" r="5.300" fill="#f8f8f8" stroke="#8a8a8a" stroke-width=".8"/><path d="M3.900 3.900l4.200 4.200M8.100 3.900L3.900 8.100" stroke="#555" stroke-width="1"/></svg>
<div style="position:absolute;left:120.00px;top:173.30px;width:104.00px;height:24.00px;box-sizing:border-box;border:1px solid #4a4a4a;border-right:none;border-radius:4px 0 0 4px;background:#d9d9d9;overflow:hidden;"><div style="position:absolute;left:0;top:0;bottom:0;width:9px;background:#7c7c7c;border-right:1px solid #555;"></div></div>
<div style="position:absolute;left:122.50px;top:176.30px;width:6.00px;height:18.00px;background-image:radial-gradient(circle,rgba(255,255,255,.250) 0.700px,transparent 1px);background-size:3px 3px;"></div>
<div class="t" style="left:132.60px;top:173.71px;font-size:7.20px;line-height:9px;color:#1c1c3c;letter-spacing:0.260px;">Alternate Pattern</div>
<div style="position:absolute;left:134.00px;top:183.40px;width:12.40px;height:12.40px;border-radius:50%;background:radial-gradient(circle,#e06a6a 0,#e06a6a 36%,#fff 46%,#f4f4f4 100%);box-shadow:0 0 0 .8px #999;"></div>
<div style="position:absolute;left:151.00px;top:184.30px;width:29.50px;height:10.50px;border-radius:3px;border:1px solid #a0a0a0;background:linear-gradient(#fff,#e8e8e8);box-sizing:border-box;box-shadow:0 .5px 1px rgba(0,0,0,.250);"></div>
<div style="position:absolute;left:162.00px;top:189.10px;width:6.50px;height:1.00px;background:#aaa;"></div>
<svg style="position:absolute;left:171px;top:187.9px" width="6" height="4" viewBox="0 0 6 4"><path d="M0 0h6L3 3.600z" fill="#111"/></svg>
<div style="position:absolute;left:185.00px;top:184.30px;width:10.50px;height:10.50px;border-radius:2px;border:1px solid #8a2a2a;background:linear-gradient(#e86060,#c83030);box-sizing:border-box;box-shadow:0 0 1px rgba(0,0,0,.3);"><div style="position:absolute;left:0;right:0;top:0;bottom:0;text-align:center;font-size:8.2px;line-height:9.3px;color:#300;">M</div></div>
<div style="position:absolute;left:199.50px;top:184.30px;width:6.00px;height:10.50px;border:1px solid #a8a8a8;background:linear-gradient(90deg,#f4f4f4,#dcdcdc);box-sizing:border-box;"></div>
<svg style="position:absolute;left:209.500px;top:183.9px" width="12" height="12" viewBox="0 0 12 12"><circle cx="6" cy="6" r="5.300" fill="#f8f8f8" stroke="#8a8a8a" stroke-width=".8"/><path d="M3.900 3.900l4.200 4.200M8.100 3.900L3.900 8.100" stroke="#555" stroke-width="1"/></svg>
<div style="position:absolute;left:120.00px;top:197.40px;width:104.00px;height:24.00px;box-sizing:border-box;border:1px solid #4a4a4a;border-right:none;border-radius:4px 0 0 4px;background:#d9d9d9;overflow:hidden;"><div style="position:absolute;left:0;top:0;bottom:0;width:9px;background:#7c7c7c;border-right:1px solid #555;"></div></div>
<div style="position:absolute;left:122.50px;top:200.40px;width:6.00px;height:18.00px;background-image:radial-gradient(circle,rgba(255,255,255,.250) 0.700px,transparent 1px);background-size:3px 3px;"></div>
<div class="t" style="left:132.60px;top:197.81px;font-size:7.20px;line-height:9px;color:#1c1c3c;letter-spacing:0.144px;">Main Pattern</div>
<div style="position:absolute;left:134.00px;top:207.50px;width:12.40px;height:12.40px;border-radius:50%;background:radial-gradient(circle,#e06a6a 0,#e06a6a 36%,#fff 46%,#f4f4f4 100%);box-shadow:0 0 0 .8px #999;"></div>
<div style="position:absolute;left:151.00px;top:208.40px;width:29.50px;height:10.50px;border-radius:3px;border:1px solid #a0a0a0;background:linear-gradient(#fff,#e8e8e8);box-sizing:border-box;box-shadow:0 .5px 1px rgba(0,0,0,.250);"></div>
<div style="position:absolute;left:162.00px;top:213.20px;width:6.50px;height:1.00px;background:#aaa;"></div>
<svg style="position:absolute;left:171px;top:212.0px" width="6" height="4" viewBox="0 0 6 4"><path d="M0 0h6L3 3.600z" fill="#111"/></svg>
<div style="position:absolute;left:185.00px;top:208.40px;width:10.50px;height:10.50px;border-radius:2px;border:1px solid #a6a6a6;background:linear-gradient(#ffffff,#ececec);box-sizing:border-box;box-shadow:0 .5px 1px rgba(0,0,0,.250);"><div style="position:absolute;left:0;right:0;top:0;bottom:0;text-align:center;font-size:8.2px;line-height:9.3px;color:#111;">M</div></div>
<div style="position:absolute;left:199.50px;top:208.40px;width:6.00px;height:10.50px;border:1px solid #a8a8a8;background:linear-gradient(90deg,#f4f4f4,#dcdcdc);box-sizing:border-box;"></div>
<svg style="position:absolute;left:209.500px;top:208.0px" width="12" height="12" viewBox="0 0 12 12"><circle cx="6" cy="6" r="5.300" fill="#f8f8f8" stroke="#8a8a8a" stroke-width=".8"/><path d="M3.900 3.900l4.200 4.200M8.100 3.900L3.900 8.100" stroke="#555" stroke-width="1"/></svg>
<div style="position:absolute;left:120.00px;top:221.50px;width:104.00px;height:24.00px;box-sizing:border-box;border:1px solid #4a4a4a;border-right:none;border-radius:4px 0 0 4px;background:#d9d9d9;overflow:hidden;"><div style="position:absolute;left:0;top:0;bottom:0;width:9px;background:#7c7c7c;border-right:1px solid #555;"></div></div>
<div style="position:absolute;left:122.50px;top:224.50px;width:6.00px;height:18.00px;background-image:radial-gradient(circle,rgba(255,255,255,.250) 0.700px,transparent 1px);background-size:3px 3px;"></div>
<div class="t" style="left:132.60px;top:221.91px;font-size:7.20px;line-height:9px;color:#1c1c3c;letter-spacing:0.273px;">Intro</div>
<div style="position:absolute;left:134.00px;top:231.60px;width:12.40px;height:12.40px;border-radius:50%;background:radial-gradient(circle,#e06a6a 0,#e06a6a 36%,#fff 46%,#f4f4f4 100%);box-shadow:0 0 0 .8px #999;"></div>
<div style="position:absolute;left:151.00px;top:232.50px;width:29.50px;height:10.50px;border-radius:3px;border:1px solid #a0a0a0;background:linear-gradient(#fff,#e8e8e8);box-sizing:border-box;box-shadow:0 .5px 1px rgba(0,0,0,.250);"></div>
<div style="position:absolute;left:162.00px;top:237.30px;width:6.50px;height:1.00px;background:#aaa;"></div>
<svg style="position:absolute;left:171px;top:236.1px" width="6" height="4" viewBox="0 0 6 4"><path d="M0 0h6L3 3.600z" fill="#111"/></svg>
<div style="position:absolute;left:185.00px;top:232.50px;width:10.50px;height:10.50px;border-radius:2px;border:1px solid #a6a6a6;background:linear-gradient(#ffffff,#ececec);box-sizing:border-box;box-shadow:0 .5px 1px rgba(0,0,0,.250);"><div style="position:absolute;left:0;right:0;top:0;bottom:0;text-align:center;font-size:8.2px;line-height:9.3px;color:#111;">M</div></div>
<div style="position:absolute;left:199.50px;top:232.50px;width:6.00px;height:10.50px;border:1px solid #a8a8a8;background:linear-gradient(90deg,#f4f4f4,#dcdcdc);box-sizing:border-box;"></div>
<svg style="position:absolute;left:209.500px;top:232.1px" width="12" height="12" viewBox="0 0 12 12"><circle cx="6" cy="6" r="5.300" fill="#f8f8f8" stroke="#8a8a8a" stroke-width=".8"/><path d="M3.900 3.900l4.200 4.200M8.100 3.900L3.900 8.100" stroke="#555" stroke-width="1"/></svg>
<div style="position:absolute;left:9.60px;top:247.00px;width:214.40px;height:32.50px;box-sizing:border-box;border:1px solid #484848;border-right:none;border-radius:5px 0 0 5px;background:#ececec;overflow:hidden;"><div style="position:absolute;left:0;top:0;bottom:0;width:13px;background:#f6e2bc;border-right:1px solid #555;"></div></div>
<svg style="position:absolute;left:11.9px;top:251.2px" width="7" height="6" viewBox="0 0 7 6"><path d="M0.200 0h6L3.200 4.900z" fill="#111"/></svg>
<div style="position:absolute;left:12.20px;top:258.00px;width:6.00px;height:17.00px;background-image:radial-gradient(circle,rgba(255,255,255,.7) 0.700px,transparent 1px);background-size:3px 3px;"></div>
<svg style="position:absolute;left:29.5px;top:247.5px" width="43.0" height="9.0"><path d="M0 0L3.8 8.0H38.2L42.0 0z" fill="#fff" stroke="#666" stroke-width=".8"/><path d="M0.500 0H41.5" stroke="#fff" stroke-width="1.600"/></svg><div class="t" style="left:35.60px;top:246.81px;font-size:7.20px;line-height:9px;color:#14142c;letter-spacing:0.254px;">NN-XT 1</div>
<svg style="position:absolute;left:27px;top:258px" width="45" height="20.5" viewBox="0 0 45 20.5"><rect x=".5" y=".5" width="44" height="19.500" fill="#3c3e31" stroke="#2a2a22" stroke-width="1"/><rect x="1.500" y="1.300" width="42" height="5.800" fill="#4a4b3e"/><rect x="2.500" y="2" width="8" height="4.300" fill="#aeb0a6"/><path d="M4 2.300v3.800M6 2.300v3.800" stroke="#333" stroke-width=".9"/><rect x="7.500" y="2.300" width="2.600" height="2.500" fill="#e4e4dc"/><rect x="12" y="1.500" width="9" height="1" fill="#3a86a8"/><path d="M12 3.600h3.500M16.500 3.600h4M12 5.300h3M16 5.300h4.500" stroke="#b8baa8" stroke-width=".8"/><rect x="23" y="2" width="19.500" height="4.300" fill="#8a8c7c"/><path d="M24 3h18M24 5h18" stroke="#55574a" stroke-width=".9" stroke-dasharray="1.300 1"/><path d="M25 2.200h1.200M28 2.200h1.200M35 2.200h1.200" stroke="#a8d040" stroke-width=".7"/><rect x="1.500" y="7.800" width="7.300" height="11.500" fill="#5a5c50"/><rect x="2.200" y="8.300" width="3" height="1.600" fill="#c8c8c0"/><rect x="5.800" y="9" width="2" height="3.500" fill="#b05858"/><rect x="2.200" y="10.500" width="3" height="2.500" fill="#7a86a0"/><path d="M2.200 14.500h6M2.200 16.300h6M2.200 18.100h6" stroke="#e0e0d8" stroke-width=".9" stroke-dasharray=".9 .8"/><rect x="9.600" y="8" width="34" height="11.300" fill="#2e8aa6"/><rect x="9.600" y="8" width="34" height="1.400" fill="#4aa0b8"/><path d="M10.500 10.500h6M10.500 12h6M10.500 13.500h6M10.500 15h6M10.500 17h6" stroke="#58aac0" stroke-width=".7"/><path d="M17 9.500h4l7 8.500h3" fill="none" stroke="#6cc0d4" stroke-width=".7"/><path d="M28 9.500V17.500M18 11h24" stroke="#5ab0c8" stroke-width=".6"/><path d="M42 10l.8 2.500" stroke="#c0e8f0" stroke-width=".8"/></svg>
<div style="position:absolute;left:75.00px;top:258.00px;width:11.00px;height:11.00px;border-radius:2px;border:1px solid #a6a6a6;background:linear-gradient(#ffffff,#ececec);box-sizing:border-box;box-shadow:0 .5px 1px rgba(0,0,0,.250);"><div style="position:absolute;left:0;right:0;top:0;bottom:0;text-align:center;font-size:8.2px;line-height:9.8px;color:#111;">M</div></div>
<div style="position:absolute;left:88.00px;top:258.00px;width:11.00px;height:11.00px;border-radius:2px;border:1px solid #a6a6a6;background:linear-gradient(#ffffff,#ececec);box-sizing:border-box;box-shadow:0 .5px 1px rgba(0,0,0,.250);"><div style="position:absolute;left:0;right:0;top:0;bottom:0;text-align:center;font-size:8.2px;line-height:9.8px;color:#111;">S</div></div>
<svg style="position:absolute;left:101.5px;top:256.0px" width="15" height="15" viewBox="0 0 15 15"><circle cx="7.500" cy="7.500" r="6.200" fill="#fbfbfb" stroke="#8c8c8c" stroke-width=".9"/><path d="M3 8C3.500 5.400 4.500 5.400 5 8 5.400 10.100 6.300 10.100 6.800 7.600H7.600V5.900H9.200V9.100H10.500V7H12" fill="none" stroke="#555" stroke-width=".9"/></svg>
<div style="position:absolute;left:120.00px;top:255.50px;width:104.00px;height:24.00px;box-sizing:border-box;border:1px solid #4a4a4a;border-right:none;border-radius:4px 0 0 4px;background:#ececec;overflow:hidden;"><div style="position:absolute;left:0;top:0;bottom:0;width:9px;background:#b4b4b4;border-right:1px solid #555;"></div></div>
<div style="position:absolute;left:122.50px;top:258.50px;width:6.00px;height:18.00px;background-image:radial-gradient(circle,rgba(255,255,255,.250) 0.700px,transparent 1px);background-size:3px 3px;"></div>
<div class="t" style="left:132.60px;top:255.91px;font-size:7.20px;line-height:9px;color:#1c1c3c;letter-spacing:-0.064px;">Lane 1</div>
<div style="position:absolute;left:134.00px;top:265.60px;width:12.40px;height:12.40px;border-radius:50%;background:radial-gradient(circle,#e06a6a 0,#e06a6a 36%,#fff 46%,#f4f4f4 100%);box-shadow:0 0 0 .8px #999;"></div>
<div style="position:absolute;left:151.00px;top:266.50px;width:29.50px;height:10.50px;border-radius:3px;border:1px solid #a0a0a0;background:linear-gradient(#fff,#e8e8e8);box-sizing:border-box;box-shadow:0 .5px 1px rgba(0,0,0,.250);"></div>
<div style="position:absolute;left:162.00px;top:271.30px;width:6.50px;height:1.00px;background:#aaa;"></div>
<svg style="position:absolute;left:171px;top:270.1px" width="6" height="4" viewBox="0 0 6 4"><path d="M0 0h6L3 3.600z" fill="#111"/></svg>
<div style="position:absolute;left:185.00px;top:266.50px;width:10.50px;height:10.50px;border-radius:2px;border:1px solid #8a2a2a;background:linear-gradient(#e86060,#c83030);box-sizing:border-box;box-shadow:0 0 1px rgba(0,0,0,.3);"><div style="position:absolute;left:0;right:0;top:0;bottom:0;text-align:center;font-size:8.2px;line-height:9.3px;color:#300;">M</div></div>
<div style="position:absolute;left:199.50px;top:266.50px;width:6.00px;height:10.50px;border:1px solid #a8a8a8;background:linear-gradient(90deg,#f4f4f4,#dcdcdc);box-sizing:border-box;"></div>
<svg style="position:absolute;left:209.500px;top:266.1px" width="12" height="12" viewBox="0 0 12 12"><circle cx="6" cy="6" r="5.300" fill="#f8f8f8" stroke="#8a8a8a" stroke-width=".8"/><path d="M3.900 3.900l4.200 4.200M8.100 3.900L3.900 8.100" stroke="#555" stroke-width="1"/></svg>
<div style="position:absolute;left:9.60px;top:281.50px;width:214.40px;height:32.50px;box-sizing:border-box;border:1px solid #484848;border-right:none;border-radius:5px 0 0 5px;background:#ececec;overflow:hidden;"><div style="position:absolute;left:0;top:0;bottom:0;width:13px;background:#818c7b;border-right:1px solid #555;"></div></div>
<svg style="position:absolute;left:11.9px;top:285.7px" width="7" height="6" viewBox="0 0 7 6"><path d="M0.200 0h6L3.200 4.900z" fill="#111"/></svg>
<div style="position:absolute;left:12.20px;top:293.00px;width:6.00px;height:17.00px;background-image:radial-gradient(circle,rgba(255,255,255,.3) 0.700px,transparent 1px);background-size:3px 3px;"></div>
<svg style="position:absolute;left:29.5px;top:282.0px" width="53.0" height="9.0"><path d="M0 0L3.8 8.0H48.2L52.0 0z" fill="#fff" stroke="#666" stroke-width=".8"/><path d="M0.500 0H51.5" stroke="#fff" stroke-width="1.600"/></svg><div class="t" style="left:35.60px;top:281.31px;font-size:7.20px;line-height:9px;color:#14142c;letter-spacing:0.176px;">Chords Ch1</div>
<svg style="position:absolute;left:27px;top:292px" width="45" height="10" viewBox="0 0 45 10"><rect x=".600" y=".700" width="43.800" height="8.600" fill="#ececec" stroke="#333" stroke-width="1.100"/><rect x="10" y="1.200" width="25" height="1" fill="#445a6a"/><rect x="12" y="1.200" width="4" height=".9" fill="#c8a040"/><path d="M4.500 3v4M6.500 3v4" stroke="#222" stroke-width="1"/><rect x="9.800" y="2.800" width="1" height="1.200" fill="#d04040"/><g fill="#8a96b0"><circle cx="19" cy="4.300" r="1.100"/><circle cx="24" cy="4.300" r="1.100"/><circle cx="28.700" cy="4.300" r="1.100"/><circle cx="33.500" cy="4.300" r="1.100"/></g><g fill="#e07070"><rect x="18.300" y="6.300" width="1.400" height=".9"/><rect x="23.300" y="6.300" width="1.400" height=".9"/><rect x="28" y="6.300" width="1.400" height=".9"/><rect x="32.800" y="6.300" width="1.400" height=".9"/></g><rect x="36.500" y="1.500" width="1.200" height="1" fill="#e0c040"/></svg>
<div style="position:absolute;left:75.00px;top:292.00px;width:11.00px;height:11.00px;border-radius:2px;border:1px solid #a6a6a6;background:linear-gradient(#ffffff,#ececec);box-sizing:border-box;box-shadow:0 .5px 1px rgba(0,0,0,.250);"><div style="position:absolute;left:0;right:0;top:0;bottom:0;text-align:center;font-size:8.2px;line-height:9.8px;color:#111;">M</div></div>
<div style="position:absolute;left:88.00px;top:292.00px;width:11.00px;height:11.00px;border-radius:2px;border:1px solid #a6a6a6;background:linear-gradient(#ffffff,#ececec);box-sizing:border-box;box-shadow:0 .5px 1px rgba(0,0,0,.250);"><div style="position:absolute;left:0;right:0;top:0;bottom:0;text-align:center;font-size:8.2px;line-height:9.8px;color:#111;">S</div></div>
<svg style="position:absolute;left:101.5px;top:290.0px" width="15" height="15" viewBox="0 0 15 15"><circle cx="7.500" cy="7.500" r="6.200" fill="#fbfbfb" stroke="#8c8c8c" stroke-width=".9"/><path d="M3 8C3.500 5.400 4.500 5.400 5 8 5.400 10.100 6.300 10.100 6.800 7.600H7.600V5.900H9.200V9.100H10.500V7H12" fill="none" stroke="#555" stroke-width=".9"/></svg>
<div style="position:absolute;left:120.00px;top:289.80px;width:104.00px;height:24.00px;box-sizing:border-box;border:1px solid #4a4a4a;border-right:none;border-radius:4px 0 0 4px;background:#ececec;overflow:hidden;"><div style="position:absolute;left:0;top:0;bottom:0;width:9px;background:#b4b4b4;border-right:1px solid #555;"></div></div>
<div style="position:absolute;left:122.50px;top:292.80px;width:6.00px;height:18.00px;background-image:radial-gradient(circle,rgba(255,255,255,.250) 0.700px,transparent 1px);background-size:3px 3px;"></div>
<div class="t" style="left:132.60px;top:290.21px;font-size:7.20px;line-height:9px;color:#1c1c3c;letter-spacing:0.176px;">Chords Ch1</div>
<div style="position:absolute;left:134.00px;top:299.90px;width:12.40px;height:12.40px;border-radius:50%;background:radial-gradient(circle,#e06a6a 0,#e06a6a 36%,#fff 46%,#f4f4f4 100%);box-shadow:0 0 0 .8px #999;"></div>
<div style="position:absolute;left:151.00px;top:300.80px;width:29.50px;height:10.50px;border-radius:3px;border:1px solid #a0a0a0;background:linear-gradient(#fff,#e8e8e8);box-sizing:border-box;box-shadow:0 .5px 1px rgba(0,0,0,.250);"></div>
<div style="position:absolute;left:162.00px;top:305.60px;width:6.50px;height:1.00px;background:#aaa;"></div>
<svg style="position:absolute;left:171px;top:304.4px" width="6" height="4" viewBox="0 0 6 4"><path d="M0 0h6L3 3.600z" fill="#111"/></svg>
<div style="position:absolute;left:185.00px;top:300.80px;width:10.50px;height:10.50px;border-radius:2px;border:1px solid #8a2a2a;background:linear-gradient(#e86060,#c83030);box-sizing:border-box;box-shadow:0 0 1px rgba(0,0,0,.3);"><div style="position:absolute;left:0;right:0;top:0;bottom:0;text-align:center;font-size:8.2px;line-height:9.3px;color:#300;">M</div></div>
<div style="position:absolute;left:199.50px;top:300.80px;width:6.00px;height:10.50px;border:1px solid #a8a8a8;background:linear-gradient(90deg,#f4f4f4,#dcdcdc);box-sizing:border-box;"></div>
<svg style="position:absolute;left:209.500px;top:300.4px" width="12" height="12" viewBox="0 0 12 12"><circle cx="6" cy="6" r="5.300" fill="#f8f8f8" stroke="#8a8a8a" stroke-width=".8"/><path d="M3.900 3.900l4.200 4.200M8.100 3.900L3.900 8.100" stroke="#555" stroke-width="1"/></svg>
<div style="position:absolute;left:286.00px;top:60.50px;width:725.50px;height:24.00px;box-sizing:border-box;border-top:1px solid #a8a8a8;border-left:1px solid #b0b0b0;border-bottom:1px solid #858585;background:linear-gradient(#e2e2e2 0,#f4f4f4 18%,#ffffff 50%,#f6f6f6 80%,#ececec 100%);"></div>
<svg style="position:absolute;left:286px;top:60px" width="726" height="25" viewBox="286 60 726 25"><path d="M300.15 61.5V84M409.55 61.5V84M518.95 61.5V84M628.35 61.5V84M737.75 61.5V84M847.15 61.5V84M956.55 61.5V84" stroke="#8a8a8a" stroke-width="1" fill="none"/><path d="M327.5 81V84M354.85 81V84M382.2 81V84M436.9 81V84M464.25 81V84M491.6 81V84M546.3 81V84M573.65 81V84M601 81V84M655.7 81V84M683.05 81V84M710.4 81V84M765.1 81V84M792.45 81V84M819.8 81V84M874.5 81V84M901.85 81V84M929.2 81V84M983.9 81V84" stroke="#8a8a8a" stroke-width="1" fill="none"/><path d="M293.31 82.8V84M306.99 82.8V84M313.82 82.8V84M320.66 82.8V84M334.34 82.8V84M341.18 82.8V84M348.01 82.8V84M361.69 82.8V84M368.52 82.8V84M375.36 82.8V84M389.04 82.8V84M395.88 82.8V84M402.71 82.8V84M416.39 82.8V84M423.23 82.8V84M430.06 82.8V84M443.74 82.8V84M450.58 82.8V84M457.41 82.8V84M471.09 82.8V84M477.93 82.8V84M484.76 82.8V84M498.44 82.8V84M505.28 82.8V84M512.11 82.8V84M525.79 82.8V84M532.62 82.8V84M539.46 82.8V84M553.14 82.8V84M559.98 82.8V84M566.81 82.8V84M580.49 82.8V84M587.33 82.8V84M594.16 82.8V84M607.84 82.8V84M614.67 82.8V84M621.51 82.8V84M635.19 82.8V84M642.03 82.8V84M648.86 82.8V84M662.54 82.8V84M669.38 82.8V84M676.21 82.8V84M689.89 82.8V84M696.73 82.8V84M703.56 82.8V84M717.24 82.8V84M724.08 82.8V84M730.91 82.8V84M744.59 82.8V84M751.42 82.8V84M758.26 82.8V84M771.94 82.8V84M778.78 82.8V84M785.61 82.8V84M799.29 82.8V84M806.12 82.8V84M812.96 82.8V84M826.64 82.8V84M833.48 82.8V84M840.31 82.8V84M853.99 82.8V84M860.83 82.8V84M867.66 82.8V84M881.34 82.8V84M888.17 82.8V84M895.01 82.8V84M908.69 82.8V84M915.53 82.8V84M922.36 82.8V84M936.04 82.8V84M942.88 82.8V84M949.71 82.8V84M963.39 82.8V84M970.23 82.8V84M977.06 82.8V84M990.74 82.8V84M997.58 82.8V84M1004.41 82.8V84" stroke="#b4b4b4" stroke-width="1" fill="none"/></svg>
<div class="t" style="left:302.15px;top:60.61px;font-size:7.20px;line-height:9px;color:#222;letter-spacing:0.000px;">8</div>
<div class="t" style="left:520.95px;top:60.61px;font-size:7.20px;line-height:9px;color:#222;letter-spacing:-0.409px;">10</div>
<div class="t" style="left:630.35px;top:60.61px;font-size:7.20px;line-height:9px;color:#222;letter-spacing:0.125px;">11</div>
<div class="t" style="left:739.75px;top:60.61px;font-size:7.20px;line-height:9px;color:#222;letter-spacing:-0.409px;">12</div>
<div class="t" style="left:849.15px;top:60.61px;font-size:7.20px;line-height:9px;color:#222;letter-spacing:-0.409px;">13</div>
<div class="t" style="left:958.55px;top:60.61px;font-size:7.20px;line-height:9px;color:#222;letter-spacing:-0.409px;">14</div>
<div class="t" style="left:302.00px;top:68.81px;font-size:7.20px;line-height:9px;color:#222;letter-spacing:0.995px;">4/4</div>
<div style="position:absolute;left:1013.00px;top:61.00px;width:9.50px;height:8.50px;border:1px solid #999;background:#f4f4f4;box-sizing:border-box;"></div>
<div style="position:absolute;left:1015.00px;top:63.50px;width:5.00px;height:3.50px;border:1px solid #666;box-sizing:border-box;border-top-width:1.500px;"></div>
<div style="position:absolute;left:246.00px;top:86.50px;width:40.00px;height:25.00px;background:#dddddd;border:1px solid #bcbcbc;box-sizing:border-box;"></div>
<div style="position:absolute;left:1009.50px;top:86.50px;width:12.50px;height:25.00px;background:#f2f2f2;border:1px solid #d0d0d0;box-sizing:border-box;"></div>
<svg style="position:absolute;left:286px;top:86px" width="724" height="26" viewBox="286 86 724 26"><rect x="286" y="86.5" width="123" height="25" fill="#878787"/><rect x="409" y="86.5" width="438.2" height="25" fill="#f3f5ed"/><rect x="847.2" y="86.5" width="162.3" height="25" fill="#7c8171"/><rect x="409" y="86.5" width="438.2" height="2.200" fill="#f0f0f0"/><rect x="409" y="88.6" width="438.2" height="2.200" fill="#b6b6b2"/><defs><linearGradient id="ob" x1="0" y1="0" x2="0" y2="1"><stop offset="0" stop-color="#9a9a9a"/><stop offset="1" stop-color="#686a64"/></linearGradient></defs><rect x="847.2" y="86.5" width="162.3" height="4.200" fill="url(#ob)"/><rect x="409" y="110.5" width="438.2" height="1" fill="#d8dad2"/><path d="M300.15 86.5V111.5M327.5 86.5V111.5M354.85 86.5V111.5M382.2 86.5V111.5" stroke="#7e7e7e" stroke-width="1" fill="none"/><path d="M874.5 86.5V90.7M901.85 86.5V90.7M929.2 86.5V90.7M956.55 86.5V90.7M983.9 86.5V90.7" stroke="#5c5f56" stroke-width="1" fill="none"/><rect x="409.55" y="107" width="13.68" height="1.150" fill="rgba(90,92,84,.700)"/><rect x="477.93" y="107" width="13.68" height="1.150" fill="rgba(90,92,84,.700)"/><rect x="518.95" y="107" width="13.68" height="1.150" fill="rgba(90,92,84,.700)"/><rect x="587.33" y="107" width="13.68" height="1.150" fill="rgba(90,92,84,.700)"/><rect x="614.67" y="107" width="13.68" height="1.150" fill="rgba(90,92,84,.700)"/><rect x="628.35" y="107" width="13.68" height="1.150" fill="rgba(90,92,84,.700)"/><rect x="696.73" y="107" width="13.68" height="1.150" fill="rgba(90,92,84,.700)"/><rect x="737.75" y="107" width="13.68" height="1.150" fill="rgba(90,92,84,.700)"/><rect x="806.12" y="107" width="13.68" height="1.150" fill="rgba(90,92,84,.700)"/><rect x="826.64" y="107" width="13.68" height="1.150" fill="rgba(90,92,84,.700)"/><rect x="409.55" y="105.88" width="13.68" height="1.150" fill="rgba(120,122,112,.500)"/><rect x="477.93" y="105.88" width="13.68" height="1.150" fill="rgba(120,122,112,.500)"/><rect x="518.95" y="105.88" width="13.68" height="1.150" fill="rgba(120,122,112,.500)"/><rect x="587.33" y="105.88" width="13.68" height="1.150" fill="rgba(120,122,112,.500)"/><rect x="614.67" y="105.88" width="13.68" height="1.150" fill="rgba(120,122,112,.500)"/><rect x="628.35" y="105.88" width="13.68" height="1.150" fill="rgba(120,122,112,.500)"/><rect x="696.73" y="105.88" width="13.68" height="1.150" fill="rgba(120,122,112,.500)"/><rect x="737.75" y="105.88" width="13.68" height="1.150" fill="rgba(120,122,112,.500)"/><rect x="806.12" y="105.88" width="13.68" height="1.150" fill="rgba(120,122,112,.500)"/><rect x="826.64" y="105.88" width="13.68" height="1.150" fill="rgba(120,122,112,.500)"/><rect x="457.41" y="104.76" width="13.68" height="1.150" fill="rgba(90,92,84,.700)"/><rect x="471.09" y="104.76" width="13.68" height="1.150" fill="rgba(90,92,84,.700)"/><rect x="566.81" y="104.76" width="13.68" height="1.150" fill="rgba(90,92,84,.700)"/><rect x="580.49" y="104.76" width="13.68" height="1.150" fill="rgba(90,92,84,.700)"/><rect x="676.21" y="104.76" width="13.68" height="1.150" fill="rgba(90,92,84,.700)"/><rect x="689.89" y="104.76" width="13.68" height="1.150" fill="rgba(90,92,84,.700)"/><rect x="785.61" y="104.76" width="13.68" height="1.150" fill="rgba(90,92,84,.700)"/><rect x="799.29" y="104.76" width="13.68" height="1.150" fill="rgba(90,92,84,.700)"/><rect x="826.64" y="104.76" width="13.68" height="1.150" fill="rgba(90,92,84,.700)"/><rect x="457.41" y="103.64" width="13.68" height="1.150" fill="rgba(120,122,112,.500)"/><rect x="566.81" y="103.64" width="13.68" height="1.150" fill="rgba(120,122,112,.500)"/><rect x="676.21" y="103.64" width="13.68" height="1.150" fill="rgba(120,122,112,.500)"/><rect x="785.61" y="103.64" width="13.68" height="1.150" fill="rgba(120,122,112,.500)"/><rect x="840.31" y="103.64" width="6.89" height="1.150" fill="rgba(120,122,112,.500)"/><rect x="436.9" y="102.52" width="13.68" height="1.150" fill="rgba(120,122,112,.500)"/><rect x="491.6" y="102.52" width="13.68" height="1.150" fill="rgba(120,122,112,.500)"/><rect x="546.3" y="102.52" width="13.68" height="1.150" fill="rgba(120,122,112,.500)"/><rect x="601" y="102.52" width="13.68" height="1.150" fill="rgba(120,122,112,.500)"/><rect x="655.7" y="102.52" width="13.68" height="1.150" fill="rgba(120,122,112,.500)"/><rect x="710.4" y="102.52" width="13.68" height="1.150" fill="rgba(120,122,112,.500)"/><rect x="765.1" y="102.52" width="13.68" height="1.150" fill="rgba(120,122,112,.500)"/><rect x="819.8" y="102.52" width="13.68" height="1.150" fill="rgba(120,122,112,.500)"/><rect x="423.23" y="101.4" width="13.68" height="1.150" fill="rgba(120,122,112,.500)"/><rect x="450.58" y="101.4" width="13.68" height="1.150" fill="rgba(120,122,112,.500)"/><rect x="477.93" y="101.4" width="13.68" height="1.150" fill="rgba(120,122,112,.500)"/><rect x="491.6" y="101.4" width="13.68" height="1.150" fill="rgba(120,122,112,.500)"/><rect x="505.28" y="101.4" width="13.68" height="1.150" fill="rgba(120,122,112,.500)"/><rect x="532.62" y="101.4" width="13.68" height="1.150" fill="rgba(120,122,112,.500)"/><rect x="559.98" y="101.4" width="13.68" height="1.150" fill="rgba(120,122,112,.500)"/><rect x="614.67" y="101.4" width="13.68" height="1.150" fill="rgba(120,122,112,.500)"/><rect x="642.03" y="101.4" width="13.68" height="1.150" fill="rgba(120,122,112,.500)"/><rect x="669.38" y="101.4" width="13.68" height="1.150" fill="rgba(120,122,112,.500)"/><rect x="724.08" y="101.4" width="13.68" height="1.150" fill="rgba(120,122,112,.500)"/><rect x="751.42" y="101.4" width="13.68" height="1.150" fill="rgba(120,122,112,.500)"/><rect x="778.78" y="101.4" width="13.68" height="1.150" fill="rgba(120,122,112,.500)"/><rect x="806.12" y="101.4" width="13.68" height="1.150" fill="rgba(120,122,112,.500)"/><rect x="826.64" y="101.4" width="13.68" height="1.150" fill="rgba(120,122,112,.500)"/><rect x="847.15" y="107" width="13.68" height="1.150" fill="rgba(40,44,36,.600)"/><rect x="915.53" y="107" width="13.68" height="1.150" fill="rgba(40,44,36,.600)"/><rect x="956.55" y="107" width="13.68" height="1.150" fill="rgba(40,44,36,.600)"/><rect x="847.15" y="105.88" width="13.68" height="1.150" fill="rgba(50,54,46,.400)"/><rect x="915.53" y="105.88" width="13.68" height="1.150" fill="rgba(50,54,46,.400)"/><rect x="956.55" y="105.88" width="13.68" height="1.150" fill="rgba(50,54,46,.400)"/><rect x="895.01" y="104.76" width="13.68" height="1.150" fill="rgba(40,44,36,.600)"/><rect x="908.69" y="104.76" width="13.68" height="1.150" fill="rgba(40,44,36,.600)"/><rect x="1004.41" y="104.76" width="5.09" height="1.150" fill="rgba(40,44,36,.600)"/><rect x="895.01" y="103.64" width="13.68" height="1.150" fill="rgba(50,54,46,.400)"/><rect x="1004.41" y="103.64" width="5.09" height="1.150" fill="rgba(50,54,46,.400)"/><rect x="874.5" y="102.52" width="13.68" height="1.150" fill="rgba(50,54,46,.400)"/><rect x="929.2" y="102.52" width="13.68" height="1.150" fill="rgba(50,54,46,.400)"/><rect x="983.9" y="102.52" width="13.68" height="1.150" fill="rgba(50,54,46,.400)"/><rect x="860.83" y="101.4" width="13.68" height="1.150" fill="rgba(50,54,46,.400)"/><rect x="888.17" y="101.4" width="13.68" height="1.150" fill="rgba(50,54,46,.400)"/><rect x="915.53" y="101.4" width="13.68" height="1.150" fill="rgba(50,54,46,.400)"/><rect x="929.2" y="101.4" width="13.68" height="1.150" fill="rgba(50,54,46,.400)"/><rect x="942.88" y="101.4" width="13.68" height="1.150" fill="rgba(50,54,46,.400)"/><rect x="970.23" y="101.4" width="13.68" height="1.150" fill="rgba(50,54,46,.400)"/><rect x="997.58" y="101.4" width="11.92" height="1.150" fill="rgba(50,54,46,.400)"/></svg>
<svg style="position:absolute;left:399.500px;top:96px" width="10" height="10" viewBox="0 0 10 10"><path d="M8.600 1.500v6.400L2.200 4.700z" fill="#000" stroke="#f4f4f4" stroke-width="1.200" stroke-linejoin="round"/></svg>
<svg style="position:absolute;left:847.500px;top:96px" width="10" height="10" viewBox="0 0 10 10"><path d="M1.600 1.500v6.400L8 4.700z" fill="#000" stroke="#f4f4f4" stroke-width="1.200" stroke-linejoin="round"/></svg>
<div style="position:absolute;left:246.00px;top:111.50px;width:776.00px;height:4.10px;background:#f8f8f8;"></div>
<div style="position:absolute;left:246.00px;top:115.60px;width:40.00px;height:128.50px;background:#b5cca0;"></div>
<div style="position:absolute;left:246.00px;top:127.45px;width:40.00px;height:1.00px;background:#dbe6cf;"></div>
<div class="t" style="left:247.60px;top:117.57px;font-size:7.30px;line-height:9px;color:#15203a;width:38.40px;overflow:hidden;white-space:nowrap;letter-spacing:0.300px;">EdsKick.wav</div>
<div style="position:absolute;left:246.00px;top:140.30px;width:40.00px;height:1.00px;background:#dbe6cf;"></div>
<div class="t" style="left:247.60px;top:130.42px;font-size:7.30px;line-height:9px;color:#15203a;width:38.40px;overflow:hidden;white-space:nowrap;letter-spacing:0.300px;">NeckKick.wav</div>
<div style="position:absolute;left:246.00px;top:153.15px;width:40.00px;height:1.00px;background:#dbe6cf;"></div>
<div class="t" style="left:247.60px;top:143.27px;font-size:7.30px;line-height:9px;color:#15203a;width:38.40px;overflow:hidden;white-space:nowrap;letter-spacing:0.300px;">SupaTiteSnare</div>
<div style="position:absolute;left:246.00px;top:166.00px;width:40.00px;height:1.00px;background:#dbe6cf;"></div>
<div class="t" style="left:247.60px;top:156.12px;font-size:7.30px;line-height:9px;color:#15203a;width:38.40px;overflow:hidden;white-space:nowrap;letter-spacing:0.300px;">Chunky.rx2</div>
<div style="position:absolute;left:246.00px;top:178.85px;width:40.00px;height:1.00px;background:#dbe6cf;"></div>
<div class="t" style="left:247.60px;top:168.97px;font-size:7.30px;line-height:9px;color:#15203a;width:38.40px;overflow:hidden;white-space:nowrap;letter-spacing:0.300px;">AMClap.wav</div>
<div style="position:absolute;left:246.00px;top:191.70px;width:40.00px;height:1.00px;background:#dbe6cf;"></div>
<div class="t" style="left:247.60px;top:181.82px;font-size:7.30px;line-height:9px;color:#15203a;width:38.40px;overflow:hidden;white-space:nowrap;letter-spacing:0.300px;">ohat1.wav</div>
<div style="position:absolute;left:246.00px;top:204.55px;width:40.00px;height:1.00px;background:#dbe6cf;"></div>
<div class="t" style="left:247.60px;top:194.67px;font-size:7.30px;line-height:9px;color:#15203a;width:38.40px;overflow:hidden;white-space:nowrap;letter-spacing:0.300px;">Channel 7</div>
<div style="position:absolute;left:246.00px;top:217.40px;width:40.00px;height:1.00px;background:#dbe6cf;"></div>
<div class="t" style="left:247.60px;top:207.52px;font-size:7.30px;line-height:9px;color:#15203a;width:38.40px;overflow:hidden;white-space:nowrap;letter-spacing:0.300px;">Channel 8</div>
<div style="position:absolute;left:246.00px;top:230.25px;width:40.00px;height:1.00px;background:#dbe6cf;"></div>
<div class="t" style="left:247.60px;top:220.37px;font-size:7.30px;line-height:9px;color:#15203a;width:38.40px;overflow:hidden;white-space:nowrap;letter-spacing:0.300px;">Channel 9</div>
<div style="position:absolute;left:246.00px;top:243.10px;width:40.00px;height:1.00px;background:#dbe6cf;"></div>
<div class="t" style="left:247.60px;top:233.22px;font-size:7.30px;line-height:9px;color:#15203a;width:38.40px;overflow:hidden;white-space:nowrap;letter-spacing:0.300px;">Channel 10</div>
<svg style="position:absolute;left:286px;top:115px" width="724" height="130" viewBox="286 115 724 130"><rect x="286" y="115.6" width="123" height="128.5" fill="#757575"/><rect x="409" y="115.6" width="438.2" height="128.5" fill="#c6c9c1"/><rect x="847.2" y="115.6" width="162.3" height="128.5" fill="#73746f"/><path d="M300.15 115.6V244.1M327.5 115.6V244.1M354.85 115.6V244.1M382.2 115.6V244.1" stroke="#6e6e6e" stroke-width="1" fill="none"/><path d="M436.9 115.6V244.1M464.25 115.6V244.1M491.6 115.6V244.1M546.3 115.6V244.1M573.65 115.6V244.1M601 115.6V244.1M655.7 115.6V244.1M683.05 115.6V244.1M710.4 115.6V244.1M765.1 115.6V244.1M792.45 115.6V244.1M819.8 115.6V244.1" stroke="#b7bab2" stroke-width="1" fill="none"/><path d="M518.95 115.6V244.1M628.35 115.6V244.1M737.75 115.6V244.1" stroke="#a0a39c" stroke-width="1" fill="none"/><path d="M874.5 115.6V244.1M901.85 115.6V244.1M929.2 115.6V244.1M956.55 115.6V244.1M983.9 115.6V244.1" stroke="#686962" stroke-width="1" fill="none"/><g fill="#5b5b61"><rect x="847.15" y="115.6" width="13.68" height="12.85"/><rect x="915.53" y="115.6" width="13.68" height="12.85"/><rect x="956.55" y="115.6" width="13.68" height="12.85"/><rect x="847.15" y="128.45" width="13.68" height="12.85"/><rect x="915.53" y="128.45" width="13.68" height="12.85"/><rect x="956.55" y="128.45" width="13.68" height="12.85"/><rect x="895.01" y="141.3" width="13.68" height="12.85"/><rect x="908.69" y="141.3" width="13.68" height="12.85"/><rect x="1004.41" y="141.3" width="5.09" height="12.85"/><rect x="895.01" y="154.15" width="13.68" height="12.85"/><rect x="1004.41" y="154.15" width="5.09" height="12.85"/><rect x="874.5" y="167" width="13.68" height="12.85"/><rect x="929.2" y="167" width="13.68" height="12.85"/><rect x="983.9" y="167" width="13.68" height="12.85"/><rect x="860.83" y="179.85" width="13.68" height="12.85"/><rect x="888.17" y="179.85" width="13.68" height="12.85"/><rect x="915.53" y="179.85" width="13.68" height="12.85"/><rect x="929.2" y="179.85" width="13.68" height="12.85"/><rect x="942.88" y="179.85" width="13.68" height="12.85"/><rect x="970.23" y="179.85" width="13.68" height="12.85"/><rect x="997.58" y="179.85" width="11.92" height="12.85"/></g><path d="M286 127.95H409M286 140.8H409M286 153.65H409M286 166.5H409M286 179.35H409M286 192.2H409M286 205.05H409M286 217.9H409M286 230.75H409M286 243.6H409" stroke="#858585" stroke-width="1" fill="none"/><path d="M409 127.95H847.2M409 140.8H847.2M409 153.65H847.2M409 166.5H847.2M409 179.35H847.2M409 192.2H847.2M409 205.05H847.2M409 217.9H847.2M409 230.75H847.2M409 243.6H847.2" stroke="#eaede5" stroke-width="1.250" fill="none"/><path d="M847.2 127.95H1009.5M847.2 140.8H1009.5M847.2 153.65H1009.5M847.2 166.5H1009.5M847.2 179.35H1009.5M847.2 192.2H1009.5M847.2 205.05H1009.5M847.2 217.9H1009.5M847.2 230.75H1009.5M847.2 243.6H1009.5" stroke="#86877f" stroke-width="1" fill="none"/><rect x="846.9" y="115.6" width="1.900" height="128.5" fill="#3e3e3c"/><g fill="#ee8f70" stroke="#1c100a" stroke-width="1.200"><rect x="409.7" y="116.05" width="12.78" height="12.75"/><rect x="478.07" y="116.05" width="12.78" height="12.75"/><rect x="519.1" y="116.05" width="12.78" height="12.75"/><rect x="587.48" y="116.05" width="12.78" height="12.75"/><rect x="614.82" y="116.05" width="12.78" height="12.75"/><rect x="628.5" y="116.05" width="12.78" height="12.75"/><rect x="696.88" y="116.05" width="12.78" height="12.75"/><rect x="737.9" y="116.05" width="12.78" height="12.75"/><rect x="806.27" y="116.05" width="12.78" height="12.75"/><rect x="826.79" y="116.05" width="12.78" height="12.75"/><rect x="409.7" y="128.9" width="12.78" height="12.75"/><rect x="478.07" y="128.9" width="12.78" height="12.75"/><rect x="519.1" y="128.9" width="12.78" height="12.75"/><rect x="587.48" y="128.9" width="12.78" height="12.75"/><rect x="614.82" y="128.9" width="12.78" height="12.75"/><rect x="628.5" y="128.9" width="12.78" height="12.75"/><rect x="696.88" y="128.9" width="12.78" height="12.75"/><rect x="737.9" y="128.9" width="12.78" height="12.75"/><rect x="806.27" y="128.9" width="12.78" height="12.75"/><rect x="826.79" y="128.9" width="12.78" height="12.75"/><rect x="457.56" y="141.75" width="12.78" height="12.75"/><rect x="471.24" y="141.75" width="12.78" height="12.75"/><rect x="566.96" y="141.75" width="12.78" height="12.75"/><rect x="580.64" y="141.75" width="12.78" height="12.75"/><rect x="676.36" y="141.75" width="12.78" height="12.75"/><rect x="690.04" y="141.75" width="12.78" height="12.75"/><rect x="785.76" y="141.75" width="12.78" height="12.75"/><rect x="799.44" y="141.75" width="12.78" height="12.75"/><rect x="826.79" y="141.75" width="12.78" height="12.75"/><rect x="457.56" y="154.6" width="12.78" height="12.75"/><rect x="566.96" y="154.6" width="12.78" height="12.75"/><rect x="676.36" y="154.6" width="12.78" height="12.75"/><rect x="785.76" y="154.6" width="12.78" height="12.75"/><rect x="840.46" y="154.6" width="12.78" height="12.75"/><rect x="437.05" y="167.45" width="12.78" height="12.75"/><rect x="491.75" y="167.45" width="12.78" height="12.75"/><rect x="546.45" y="167.45" width="12.78" height="12.75"/><rect x="601.15" y="167.45" width="12.78" height="12.75"/><rect x="655.85" y="167.45" width="12.78" height="12.75"/><rect x="710.55" y="167.45" width="12.78" height="12.75"/><rect x="765.25" y="167.45" width="12.78" height="12.75"/><rect x="819.95" y="167.45" width="12.78" height="12.75"/><rect x="423.38" y="180.3" width="12.78" height="12.75"/><rect x="450.73" y="180.3" width="12.78" height="12.75"/><rect x="478.07" y="180.3" width="12.78" height="12.75"/><rect x="491.75" y="180.3" width="12.78" height="12.75"/><rect x="505.43" y="180.3" width="12.78" height="12.75"/><rect x="532.77" y="180.3" width="12.78" height="12.75"/><rect x="560.12" y="180.3" width="12.78" height="12.75"/><rect x="614.82" y="180.3" width="12.78" height="12.75"/><rect x="642.18" y="180.3" width="12.78" height="12.75"/><rect x="669.52" y="180.3" width="12.78" height="12.75"/><rect x="724.23" y="180.3" width="12.78" height="12.75"/><rect x="751.57" y="180.3" width="12.78" height="12.75"/><rect x="778.93" y="180.3" width="12.78" height="12.75"/><rect x="806.27" y="180.3" width="12.78" height="12.75"/><rect x="826.79" y="180.3" width="12.78" height="12.75"/></g></svg>
<div style="position:absolute;left:246.00px;top:244.10px;width:763.50px;height:261.40px;background:#fff;border-bottom:1px solid #c4c4c4;border-left:1px solid #e0e0e0;box-sizing:border-box;"></div>
<div style="position:absolute;left:1009.50px;top:115.60px;width:12.00px;height:390.00px;background:linear-gradient(90deg,#c8c8c8 0,#f0f0f0 20%,#ffffff 55%,#eaeaea 100%);border-left:1px solid #b0b0b0;box-sizing:border-box;"></div>
<div style="position:absolute;left:1010.00px;top:116.00px;width:11.50px;height:11.50px;background:#f6f6f6;border:1px solid #b4b4b4;box-sizing:border-box;"></div>
<div style="position:absolute;left:1010.00px;top:127.50px;width:11.50px;height:11.50px;background:#f6f6f6;border:1px solid #b4b4b4;box-sizing:border-box;"></div>
<div style="position:absolute;left:1010.00px;top:139.50px;width:11.50px;height:11.50px;background:#f6f6f6;border:1px solid #b4b4b4;box-sizing:border-box;"></div>
<div style="position:absolute;left:1010.00px;top:151.50px;width:11.50px;height:11.50px;background:#f6f6f6;border:1px solid #b4b4b4;box-sizing:border-box;"></div>
<svg style="position:absolute;left:1010px;top:116px" width="12" height="48" viewBox="0 0 12 48"><path d="M1.500 3h6.500M1.500 5.500h6.500M1.500 3v3" stroke="#222" stroke-width="1" fill="none"/><path d="M6 8.500h4.500L8.250 11z" fill="#111"/><rect x="1.500" y="14" width="6.500" height="5" fill="#3a8ac0" stroke="#123" stroke-width=".6"/><path d="M1.500 16.500h6.500" stroke="#123" stroke-width=".6"/><path d="M6 20.500h4.500L8.250 23z" fill="#111"/><circle cx="5" cy="28.500" r="3" fill="#fff" stroke="#555" stroke-width=".8"/><path d="M3.500 28.500h3M5 27v3" stroke="#444" stroke-width=".8"/><path d="M7.200 30.800l2.600 3" stroke="#555" stroke-width="1.300"/><circle cx="5" cy="40.500" r="3" fill="#fff" stroke="#555" stroke-width=".8"/><path d="M3.500 40.500h3" stroke="#444" stroke-width=".8"/><path d="M7.200 42.800l2.600 3" stroke="#555" stroke-width="1.300"/></svg>
<svg style="position:absolute;left:631px;top:505.500px" width="6" height="5" viewBox="0 0 6 5"><path d="M1.200 3.600q.3-2.200 2.200-2.200 1.300 0 1.800 1.400" stroke="#333" stroke-width="1.200" fill="none"/></svg>
<div style="position:absolute;left:246.00px;top:511.50px;width:40.00px;height:64.50px;background:#dddddd;border:1px solid #c4c4c4;border-right:none;box-sizing:border-box;"></div>
<div style="position:absolute;left:1009.50px;top:511.50px;width:12.50px;height:64.50px;background:#f2f2f2;border:1px solid #c8c8c8;box-sizing:border-box;"></div>
<div class="t" style="left:248.00px;top:512.01px;font-size:7.20px;line-height:9px;color:#666;letter-spacing:0.243px;">127</div>
<div class="t" style="left:248.00px;top:524.41px;font-size:7.20px;line-height:9px;color:#666;letter-spacing:0.291px;">96</div>
<div class="t" style="left:248.00px;top:539.01px;font-size:7.20px;line-height:9px;color:#666;letter-spacing:0.291px;">64</div>
<div class="t" style="left:248.00px;top:554.01px;font-size:7.20px;line-height:9px;color:#666;letter-spacing:0.291px;">32</div>
<div class="t" style="left:248.00px;top:567.31px;font-size:7.20px;line-height:9px;color:#666;letter-spacing:0.000px;">0</div>
<div style="position:absolute;left:279.00px;top:514.00px;width:7.00px;height:1.00px;background:#9a9a9a;"></div>
<div style="position:absolute;left:279.00px;top:528.70px;width:7.00px;height:1.00px;background:#9a9a9a;"></div>
<div style="position:absolute;left:279.00px;top:543.20px;width:7.00px;height:1.00px;background:#9a9a9a;"></div>
<div style="position:absolute;left:279.00px;top:557.90px;width:7.00px;height:1.00px;background:#9a9a9a;"></div>
<div style="position:absolute;left:279.00px;top:572.90px;width:7.00px;height:1.00px;background:#9a9a9a;"></div>
<svg style="position:absolute;left:286px;top:511px" width="724" height="66" viewBox="286 511 724 66"><rect x="286" y="511.5" width="123" height="64.5" fill="#878787"/><rect x="409" y="511.5" width="438.2" height="64.5" fill="#f3f5ed"/><rect x="847.2" y="511.5" width="162.3" height="64.5" fill="#898d84"/><rect x="286" y="511.5" width="123" height="1" fill="#707070"/><rect x="409" y="511.2" width="438.2" height="1" fill="#a4a6a0"/><rect x="847.2" y="511.5" width="162.3" height="1" fill="#70736a"/><path d="M286 514.5H409M286 529.2H409M286 543.7H409M286 558.4H409M286 573.4H409M300.15 511.5V576M327.5 511.5V576M354.85 511.5V576M382.2 511.5V576" stroke="#7b7b7b" stroke-width=".9" fill="none"/><path d="M409 514.5H847.2M409 529.2H847.2M409 543.7H847.2M409 558.4H847.2M409 573.4H847.2M436.9 511.5V576M464.25 511.5V576M491.6 511.5V576M518.95 511.5V576M546.3 511.5V576M573.65 511.5V576M601 511.5V576M628.35 511.5V576M655.7 511.5V576M683.05 511.5V576M710.4 511.5V576M737.75 511.5V576M765.1 511.5V576M792.45 511.5V576M819.8 511.5V576" stroke="#e2e5db" stroke-width="1" fill="none"/><path d="M847.2 514.5H1009.5M847.2 529.2H1009.5M847.2 543.7H1009.5M847.2 558.4H1009.5M847.2 573.4H1009.5M874.5 511.5V576M901.85 511.5V576M929.2 511.5V576M956.55 511.5V576M983.9 511.5V576" stroke="#80847a" stroke-width="1" fill="none"/><g fill="#5b5b61"><rect x="847.1" y="536.3" width="3.800" height="37.2"/><rect x="860.78" y="536.3" width="3.800" height="37.2"/><rect x="874.45" y="536.3" width="3.800" height="37.2"/><rect x="888.12" y="536.3" width="3.800" height="37.2"/><rect x="894.96" y="536.3" width="3.800" height="37.2"/><rect x="908.64" y="536.3" width="3.800" height="37.2"/><rect x="915.48" y="536.3" width="3.800" height="37.2"/><rect x="929.15" y="536.3" width="3.800" height="37.2"/><rect x="942.83" y="536.3" width="3.800" height="37.2"/><rect x="956.5" y="536.3" width="3.800" height="37.2"/><rect x="970.18" y="536.3" width="3.800" height="37.2"/><rect x="983.85" y="536.3" width="3.800" height="37.2"/><rect x="997.53" y="536.3" width="3.800" height="37.2"/><rect x="1004.36" y="536.3" width="3.800" height="37.2"/></g><g fill="#f2936f" stroke="#2a1a12" stroke-width="1"><rect x="410" y="536.8" width="3" height="36.3"/><rect x="423.68" y="536.8" width="3" height="36.3"/><rect x="437.35" y="536.8" width="3" height="36.3"/><rect x="451.03" y="536.8" width="3" height="36.3"/><rect x="457.86" y="536.8" width="3" height="36.3"/><rect x="471.54" y="536.8" width="3" height="36.3"/><rect x="478.38" y="536.8" width="3" height="36.3"/><rect x="492.05" y="536.8" width="3" height="36.3"/><rect x="505.73" y="536.8" width="3" height="36.3"/><rect x="519.4" y="536.8" width="3" height="36.3"/><rect x="533.08" y="536.8" width="3" height="36.3"/><rect x="546.75" y="536.8" width="3" height="36.3"/><rect x="560.43" y="536.8" width="3" height="36.3"/><rect x="567.26" y="536.8" width="3" height="36.3"/><rect x="580.94" y="536.8" width="3" height="36.3"/><rect x="587.78" y="536.8" width="3" height="36.3"/><rect x="601.45" y="536.8" width="3" height="36.3"/><rect x="615.12" y="536.8" width="3" height="36.3"/><rect x="628.8" y="536.8" width="3" height="36.3"/><rect x="642.48" y="536.8" width="3" height="36.3"/><rect x="656.15" y="536.8" width="3" height="36.3"/><rect x="669.83" y="536.8" width="3" height="36.3"/><rect x="676.66" y="536.8" width="3" height="36.3"/><rect x="690.34" y="536.8" width="3" height="36.3"/><rect x="697.18" y="536.8" width="3" height="36.3"/><rect x="710.85" y="536.8" width="3" height="36.3"/><rect x="724.53" y="536.8" width="3" height="36.3"/><rect x="738.2" y="536.8" width="3" height="36.3"/><rect x="751.88" y="536.8" width="3" height="36.3"/><rect x="765.55" y="536.8" width="3" height="36.3"/><rect x="779.23" y="536.8" width="3" height="36.3"/><rect x="786.06" y="536.8" width="3" height="36.3"/><rect x="799.74" y="536.8" width="3" height="36.3"/><rect x="806.58" y="536.8" width="3" height="36.3"/><rect x="820.25" y="536.8" width="3" height="36.3"/><rect x="827.09" y="536.8" width="3" height="36.3"/><rect x="840.76" y="536.8" width="3" height="36.3"/></g></svg>
<div class="t" style="left:294.50px;top:513.62px;font-size:11.20px;line-height:15px;color:#545454;letter-spacing:0.024px;font-weight:bold;">Velocity</div>
<div style="position:absolute;left:409.30px;top:61.00px;width:1.10px;height:25.50px;background:#8a8a8a;"></div>
<div style="position:absolute;left:409.30px;top:86.50px;width:1.20px;height:25.00px;background:#111;"></div>
<div style="position:absolute;left:409.30px;top:111.50px;width:1.20px;height:465.50px;background:#3c3c3c;"></div>
<div style="position:absolute;left:847.00px;top:89.50px;width:1.00px;height:22.00px;background:#555a4e;"></div>
<div style="position:absolute;left:846.90px;top:511.50px;width:1.90px;height:64.50px;background:#444642;"></div>
<div style="position:absolute;left:616.95px;top:80.00px;width:1.90px;height:497.50px;background:rgba(56,56,56,.700);"></div>
<svg style="position:absolute;left:409px;top:61px" width="13" height="12" viewBox="0 0 13 12"><path d="M0.500 1h7l3.500 4.200-3.500 4.300h-7z" fill="#fafafa" stroke="#777" stroke-width=".9"/><path d="M3 2.800v4.800h2.800" stroke="#444" stroke-width=".9" fill="none"/></svg>
<svg style="position:absolute;left:612px;top:71px" width="12" height="14" viewBox="0 0 12 14"><defs><linearGradient id="pm" x1="0" y1="0" x2="0" y2="1"><stop offset="0" stop-color="#ffffff"/><stop offset="1" stop-color="#d4d4d4"/></linearGradient></defs><path d="M1.700 2.500q0-.8.800-.8h7.100q.8 0 .8.800v5.300l-4.350 4-4.350-4z" fill="url(#pm)" stroke="#5c5c5c" stroke-width="1.250" stroke-linejoin="round"/><path d="M6 5.200v7.500" stroke="#707070" stroke-width="1.800"/></svg>
<div style="position:absolute;left:244.50px;top:577.00px;width:765.50px;height:13.00px;background:#fbfbfb;border-top:1px solid #c8c8c8;box-sizing:border-box;"></div>
<div style="position:absolute;left:245.00px;top:577.50px;width:11.50px;height:12.00px;background:#fafafa;border:1px solid #a8a8a8;box-sizing:border-box;"></div>
<svg style="position:absolute;left:246.0px;top:578.500px" width="10" height="11" viewBox="0 0 10 11"><circle cx="4" cy="4.200" r="3" fill="#fff" stroke="#555" stroke-width=".8"/><path d="M6.200 6.500l2.600 3" stroke="#555" stroke-width="1.300"/><path d="M2.500 4.200h3M4 2.700v3" stroke="#444" stroke-width=".8"/></svg>
<div style="position:absolute;left:352.00px;top:577.50px;width:11.50px;height:12.00px;background:#fafafa;border:1px solid #a8a8a8;box-sizing:border-box;"></div>
<svg style="position:absolute;left:353.0px;top:578.500px" width="10" height="11" viewBox="0 0 10 11"><circle cx="4" cy="4.200" r="3" fill="#fff" stroke="#555" stroke-width=".8"/><path d="M6.200 6.500l2.600 3" stroke="#555" stroke-width="1.300"/><path d="M2.500 4.200h3" stroke="#444" stroke-width=".8"/></svg>
<div style="position:absolute;left:256.50px;top:577.50px;width:95.50px;height:12.00px;background:#f6f6f6;border-top:1px solid #a8a8a8;border-bottom:1px solid #a8a8a8;box-sizing:border-box;"></div>
<svg style="position:absolute;left:256px;top:577px" width="97" height="13" viewBox="256 577 97 13"><path d="M261.5 580.5v3.500M272.5 580.5v3.500M283 580.5v3.500M293 580.5v3.500M302 580.5v3.500M310.5 580.5v3.500M318 580.5v3.500M325 580.5v3.500M331.5 580.5v3.500M337.5 580.5v3.500M342.5 580.5v3.500M346 580.5v3.500M348.5 580.5v3.500M350 580.5v3.500" stroke="#777" stroke-width=".9"/><path d="M260 586.500h89" stroke="#aaa" stroke-width="1"/><path d="M277.300 589v-5l3.200-3.200 3.200 3.200v5z" fill="#f4f4f4" stroke="#444" stroke-width=".9"/></svg>
<div style="position:absolute;left:366.00px;top:578.50px;width:619.50px;height:11.00px;border-radius:5.500px;background:linear-gradient(#dcdcdc 0,#f6f6f6 30%,#ffffff 60%,#f4f4f4 100%);box-shadow:inset 0 1px 1.500px rgba(0,0,0,.350),inset 0 0 0 .7px rgba(0,0,0,.160);"></div>
<div style="position:absolute;left:394.50px;top:578.80px;width:19.50px;height:10.40px;border-radius:5.200px;background:linear-gradient(#3a7fe0 0,#8fc0f8 35%,#4a9af0 60%,#9fd0ff 100%);box-shadow:0 0 0 .6px #2a5cb0;"></div>
<div style="position:absolute;left:985.50px;top:578.00px;width:13.50px;height:12.50px;background:#fbfbfb;border:1px solid #d4d4d4;box-sizing:border-box;"></div>
<div style="position:absolute;left:998.50px;top:578.00px;width:13.00px;height:12.50px;background:#fbfbfb;border:1px solid #d4d4d4;box-sizing:border-box;"></div>
<svg style="position:absolute;left:985.500px;top:578px" width="26" height="13" viewBox="0 0 26 13"><path d="M4.500 6.500l4.500-2.800v5.600zM21.500 6.500l-4.500-2.800v5.600z" fill="#505050"/></svg>
<div style="position:absolute;left:7.00px;top:590.00px;width:1017.00px;height:1.00px;background:#9a9a9a;"></div>
<div id="tp"><svg width="1017" height="44" style="position:absolute;left:0;top:0;opacity:.22"><filter id="br" x="0" y="0" width="100%" height="100%"><feTurbulence type="fractalNoise" baseFrequency="0.015 0.7" numOctaves="2" seed="3"/><feColorMatrix type="matrix" values="0 0 0 0 0.5  0 0 0 0 0.5  0 0 0 0 0.5  1.6 0 0 0 -0.45"/></filter><rect width="1017" height="44" filter="url(#br)"/></svg></div>
<div style="position:absolute;left:10.00px;top:593.50px;width:64.50px;height:15.00px;border-radius:2px;background:#8b8b8b;box-shadow:inset 0 1px 1px rgba(0,0,0,.3);"></div>
<svg style="position:absolute;left:10.500px;top:594.500px" width="9" height="7" viewBox="0 0 9 7"><path d="M.9.900h7L4.400 5.600z" fill="#555" stroke="#eee" stroke-width=".9"/></svg>
<div class="t" style="left:20.50px;top:595.72px;font-size:8.60px;line-height:11px;color:#f4f4f4;font-weight:bold;transform:scaleX(0.622);transform-origin:0 50%;white-space:nowrap;">DSP</div>
<div style="position:absolute;left:35.00px;top:596.00px;width:37.50px;height:10.50px;box-sizing:border-box;border:1px solid #0c1024;background:#16265a;"></div>
<div style="position:absolute;left:37.00px;top:597.50px;width:34.00px;height:7.50px;background:repeating-linear-gradient(90deg,rgba(74,106,180,.7) 0,rgba(74,106,180,.7) 1px,transparent 1px,transparent 2.420px);"></div>
<div style="position:absolute;left:58.00px;top:597.50px;width:13.00px;height:7.50px;background:linear-gradient(90deg,rgba(200,170,60,0),rgba(120,140,120,.25) 40%,rgba(130,80,110,.35) 100%);mix-blend-mode:normal;"></div>
<div style="position:absolute;left:10.00px;top:610.00px;width:64.50px;height:10.80px;border-radius:2px;background:#8b8b8b;box-shadow:inset 0 1px 1px rgba(0,0,0,.3);"></div>
<div class="t" style="left:13.00px;top:611.79px;font-size:5.50px;line-height:7px;color:#f2f2f2;font-weight:bold;transform:scaleX(1.002);transform-origin:0 50%;white-space:nowrap;">AUDIO OUT CLIP</div>
<div style="position:absolute;left:61.00px;top:613.20px;width:10.50px;height:4.00px;box-sizing:border-box;border:1px solid #4a3e3e;background:#907070;"></div>
<div class="t" style="left:12.00px;top:622.75px;font-size:8.80px;line-height:11px;color:rgba(255,255,255,.92);font-weight:bold;transform:scaleX(1.527);transform-origin:0 50%;white-space:nowrap;">transport</div>
<div style="position:absolute;left:77.50px;top:592.00px;width:1.00px;height:42.00px;background:#acacac;"></div><div style="position:absolute;left:78.50px;top:592.00px;width:1.00px;height:42.00px;background:#e6e6e6;"></div>
<div style="position:absolute;left:80.50px;top:593.50px;width:8.50px;height:8.50px;box-sizing:border-box;border:1px solid #4a4a4a;border-radius:1.500px;background:linear-gradient(135deg,#f8f8f4,#dcdcd4);box-shadow:0 .5px .5px rgba(0,0,0,.3);"></div>
<div style="position:absolute;left:80.50px;top:605.00px;width:9.00px;height:9.00px;box-sizing:border-box;border:1px solid #86b428;border-radius:1.500px;background:radial-gradient(circle,#c8f060 0,#a4dc30 60%,#98d028 100%);box-shadow:0 0 1.500px rgba(160,220,40,.8);"></div>
<div class="t" style="left:91.00px;top:594.96px;font-size:5.60px;line-height:7px;color:#5c5c5c;font-weight:bold;transform:scaleX(0.935);transform-origin:0 50%;white-space:nowrap;">CLICK</div>
<div class="t" style="left:91.00px;top:606.16px;font-size:5.60px;line-height:7px;color:#5c5c5c;font-weight:bold;transform:scaleX(0.868);transform-origin:0 50%;white-space:nowrap;">PRE</div>
<svg style="position:absolute;left:100.500px;top:603px" width="26" height="26" viewBox="0 0 26 26"><defs><linearGradient id="kg" x1="0" y1="0" x2="1" y2="1"><stop offset="0" stop-color="#ffffff"/><stop offset=".45" stop-color="#b4b4b4"/><stop offset="1" stop-color="#ececec"/></linearGradient><linearGradient id="kr" x1="0" y1="0" x2="0" y2="1"><stop offset="0" stop-color="#6a6a6a"/><stop offset="1" stop-color="#1e1e1e"/></linearGradient></defs>
<path d="M5.200 20.800A11 11 0 1 1 20.800 20.800" fill="none" stroke="#7c7c7c" stroke-width=".9"/><path d="M13 .3l1.400 2h-2.800zM3.300 21.700l1.800-.4-.3 1.900zM22.700 21.700l-1.800-.4.300 1.900z" fill="#555"/>
<circle cx="13" cy="13" r="8.600" fill="url(#kr)"/><circle cx="13" cy="13" r="5.700" fill="url(#kg)" stroke="#111" stroke-width=".7"/><path d="M13.300 12.900l5-1.300" stroke="#222" stroke-width="1.300"/></svg>
<div class="t" style="left:96.00px;top:626.56px;font-size:5.60px;line-height:7px;color:#5c5c5c;font-weight:bold;transform:scaleX(0.912);transform-origin:0 50%;white-space:nowrap;">CLICK LEVEL</div>
<div style="position:absolute;left:130.00px;top:592.00px;width:1.00px;height:42.00px;background:#acacac;"></div><div style="position:absolute;left:131.00px;top:592.00px;width:1.00px;height:42.00px;background:#e6e6e6;"></div>
<div style="position:absolute;left:134.00px;top:595.00px;width:38.50px;height:10.80px;box-sizing:border-box;border:1px solid #0c0c0c;background:linear-gradient(#1f3612 0,#36561f 28%,#33531e 100%);box-shadow:0 .5px 0 rgba(255,255,255,.5);"></div><div class="t" style="left:137.00px;top:595.96px;font-size:7.62px;line-height:10px;color:#d6de48;font-weight:bold;font-family:'Liberation Mono',monospace;white-space:pre;letter-spacing:0;">134.000</div>
<div style="position:absolute;left:172.50px;top:594.50px;width:8.00px;height:11.50px;box-sizing:border-box;border:1px solid #2a2a2a;border-radius:1.500px;background:linear-gradient(#f4f4f4,#cfcfcf 48%,#8a8a8a 50%,#ececec 54%,#d8d8d8);"><svg style="position:absolute;left:0;top:0" width="6" height="9" viewBox="0 0 6 9.500"><path d="M3 1.300L4.900 3.700H1.100zM3 8.300L1.100 5.900h3.800z" fill="#909090"/></svg></div>
<div class="t" style="left:134.00px;top:606.86px;font-size:5.60px;line-height:7px;color:#5c5c5c;font-weight:bold;transform:scaleX(0.954);transform-origin:0 50%;white-space:nowrap;">TEMPO</div>
<div style="position:absolute;left:134.00px;top:615.00px;width:38.50px;height:10.80px;box-sizing:border-box;border:1px solid #0c0c0c;background:linear-gradient(#1f3612 0,#36561f 28%,#33531e 100%);box-shadow:0 .5px 0 rgba(255,255,255,.5);"></div><div class="t" style="left:146.00px;top:615.96px;font-size:7.62px;line-height:10px;color:#d6de48;font-weight:bold;font-family:'Liberation Mono',monospace;white-space:pre;letter-spacing:0;">4/4</div>
<div style="position:absolute;left:172.50px;top:614.50px;width:8.00px;height:11.50px;box-sizing:border-box;border:1px solid #2a2a2a;border-radius:1.500px;background:linear-gradient(#f4f4f4,#cfcfcf 48%,#8a8a8a 50%,#ececec 54%,#d8d8d8);"><svg style="position:absolute;left:0;top:0" width="6" height="9" viewBox="0 0 6 9.500"><path d="M3 1.300L4.900 3.700H1.100zM3 8.300L1.100 5.900h3.800z" fill="#909090"/></svg></div>
<div class="t" style="left:134.00px;top:626.56px;font-size:5.60px;line-height:7px;color:#5c5c5c;font-weight:bold;transform:scaleX(0.968);transform-origin:0 50%;white-space:nowrap;">TIME SIGNATURE</div>
<div style="position:absolute;left:182.50px;top:592.00px;width:1.00px;height:42.00px;background:#acacac;"></div><div style="position:absolute;left:183.50px;top:592.00px;width:1.00px;height:42.00px;background:#e6e6e6;"></div>
<div style="position:absolute;left:186.50px;top:595.00px;width:75.50px;height:10.80px;box-sizing:border-box;border:1px solid #0c0c0c;background:linear-gradient(#1f3612 0,#36561f 28%,#33531e 100%);box-shadow:0 .5px 0 rgba(255,255,255,.5);"></div><div class="t" style="left:199.50px;top:595.96px;font-size:7.62px;line-height:10px;color:#d6de48;font-weight:bold;font-family:'Liberation Mono',monospace;white-space:pre;letter-spacing:0;">10. 4. 3.118</div>
<div style="position:absolute;left:262.50px;top:594.50px;width:8.00px;height:11.50px;box-sizing:border-box;border:1px solid #2a2a2a;border-radius:1.500px;background:linear-gradient(#f4f4f4,#cfcfcf 48%,#8a8a8a 50%,#ececec 54%,#d8d8d8);"><svg style="position:absolute;left:0;top:0" width="6" height="9" viewBox="0 0 6 9.500"><path d="M3 1.300L4.900 3.700H1.100zM3 8.300L1.100 5.900h3.800z" fill="#909090"/></svg></div>
<div class="t" style="left:256.50px;top:597.18px;font-size:9.00px;line-height:12px;color:#d2de3c;font-weight:bold;font-family:'Liberation Mono',monospace;">*</div>
<div class="t" style="left:187.00px;top:606.86px;font-size:5.60px;line-height:7px;color:#5c5c5c;font-weight:bold;transform:scaleX(0.945);transform-origin:0 50%;white-space:nowrap;">BARS</div>
<div class="t" style="left:206.00px;top:606.86px;font-size:5.60px;line-height:7px;color:#5c5c5c;font-weight:bold;transform:scaleX(0.970);transform-origin:0 50%;white-space:nowrap;">BEATS</div>
<div class="t" style="left:227.00px;top:606.86px;font-size:5.60px;line-height:7px;color:#5c5c5c;font-weight:bold;transform:scaleX(1.193);transform-origin:0 50%;white-space:nowrap;">1/16</div>
<div class="t" style="left:244.00px;top:606.86px;font-size:5.60px;line-height:7px;color:#5c5c5c;font-weight:bold;transform:scaleX(0.952);transform-origin:0 50%;white-space:nowrap;">TICKS</div>
<div style="position:absolute;left:186.50px;top:615.00px;width:75.50px;height:10.80px;box-sizing:border-box;border:1px solid #0c0c0c;background:linear-gradient(#1f3612 0,#36561f 28%,#33531e 100%);box-shadow:0 .5px 0 rgba(255,255,255,.5);"></div><div class="t" style="left:204.00px;top:615.96px;font-size:7.62px;line-height:10px;color:#d6de48;font-weight:bold;font-family:'Liberation Mono',monospace;white-space:pre;letter-spacing:0;">0:00:17:742</div>
<div style="position:absolute;left:262.50px;top:614.50px;width:8.00px;height:11.50px;box-sizing:border-box;border:1px solid #2a2a2a;border-radius:1.500px;background:linear-gradient(#f4f4f4,#cfcfcf 48%,#8a8a8a 50%,#ececec 54%,#d8d8d8);"><svg style="position:absolute;left:0;top:0" width="6" height="9" viewBox="0 0 6 9.500"><path d="M3 1.300L4.900 3.700H1.100zM3 8.300L1.100 5.900h3.800z" fill="#909090"/></svg></div>
<div class="t" style="left:187.00px;top:626.56px;font-size:5.60px;line-height:7px;color:#5c5c5c;font-weight:bold;transform:scaleX(0.939);transform-origin:0 50%;white-space:nowrap;">HOURS</div>
<div class="t" style="left:213.00px;top:626.56px;font-size:5.60px;line-height:7px;color:#5c5c5c;font-weight:bold;transform:scaleX(0.974);transform-origin:0 50%;white-space:nowrap;">MIN</div>
<div class="t" style="left:227.00px;top:626.56px;font-size:5.60px;line-height:7px;color:#5c5c5c;font-weight:bold;transform:scaleX(0.912);transform-origin:0 50%;white-space:nowrap;">SEC</div>
<div class="t" style="left:246.00px;top:626.56px;font-size:5.60px;line-height:7px;color:#5c5c5c;font-weight:bold;transform:scaleX(0.952);transform-origin:0 50%;white-space:nowrap;">MS</div>
<div style="position:absolute;left:273.00px;top:592.00px;width:1.00px;height:42.00px;background:#acacac;"></div><div style="position:absolute;left:274.00px;top:592.00px;width:1.00px;height:42.00px;background:#e6e6e6;"></div>
<div style="position:absolute;left:277.30px;top:594.50px;width:21.50px;height:21.20px;box-sizing:border-box;border:1.700px solid #2c2c2c;border-radius:3.500px;background:radial-gradient(ellipse at 50% 40%,#ffffff 0,#efefea 55%,#d6d6ce 100%);box-shadow:0 1px 1px rgba(0,0,0,.3);"><svg style="position:absolute;left:0;top:0" width="18" height="18" viewBox="0 0 18 18"><path d="M8.300 5.800L4.300 9l4 3.200M13 5.800L9 9l4 3.200" fill="none" stroke="#707070" stroke-width="1.300"/></svg></div>
<div style="position:absolute;left:302.00px;top:594.50px;width:21.50px;height:21.20px;box-sizing:border-box;border:1.700px solid #2c2c2c;border-radius:3.500px;background:radial-gradient(ellipse at 50% 40%,#ffffff 0,#efefea 55%,#d6d6ce 100%);box-shadow:0 1px 1px rgba(0,0,0,.3);"><svg style="position:absolute;left:0;top:0" width="18" height="18" viewBox="0 0 18 18"><path d="M5 5.800L9 9l-4 3.200M9.700 5.800l4 3.200-4 3.200" fill="none" stroke="#707070" stroke-width="1.300"/></svg></div>
<div style="position:absolute;left:326.80px;top:594.50px;width:21.50px;height:21.20px;box-sizing:border-box;border:1.700px solid #2c2c2c;border-radius:3.500px;background:radial-gradient(ellipse at 50% 40%,#ffffff 0,#efefea 55%,#d6d6ce 100%);box-shadow:0 1px 1px rgba(0,0,0,.3);"><svg style="position:absolute;left:0;top:0" width="18" height="18" viewBox="0 0 18 18"><rect x="5.800" y="5.800" width="6.600" height="6.600" fill="#707070"/></svg></div>
<div style="position:absolute;left:351.80px;top:594.50px;width:21.50px;height:21.20px;box-sizing:border-box;border:1.700px solid #2c2c2c;border-radius:3.500px;background:radial-gradient(ellipse at 50% 40%,#ffffff 0,#efefea 55%,#d6d6ce 100%);box-shadow:0 1px 1px rgba(0,0,0,.3);"><svg style="position:absolute;left:0;top:0" width="18" height="18" viewBox="0 0 18 18"><path d="M6.300 5v8.200L13 9.100z" fill="#707070"/></svg></div>
<div style="position:absolute;left:381.00px;top:594.50px;width:20.80px;height:20.80px;box-sizing:border-box;border:1.400px solid #4a1c1c;border-radius:3px;background:radial-gradient(ellipse at 50% 40%,#d45454 0,#c44040 60%,#b03434 100%);box-shadow:0 1px 1px rgba(0,0,0,.3);"></div>
<div style="position:absolute;left:387.20px;top:600.80px;width:7.80px;height:7.80px;border-radius:50%;background:#f6ecec;"></div>
<div style="position:absolute;left:278.00px;top:619.00px;width:60.00px;height:13.80px;border-radius:2px;background:#8b8b8b;box-shadow:inset 0 1px 1px rgba(0,0,0,.250);"></div>
<div style="position:absolute;left:281.00px;top:621.20px;width:8.50px;height:8.50px;box-sizing:border-box;border:1px solid #4a4a4a;border-radius:1.500px;background:linear-gradient(135deg,#f8f8f4,#dcdcd4);box-shadow:0 .5px .5px rgba(0,0,0,.3);"></div>
<div class="t" style="left:292.00px;top:620.03px;font-size:5.40px;line-height:7px;color:#f2f2f2;font-weight:bold;transform:scaleX(0.997);transform-origin:0 50%;white-space:nowrap;">AUTOMATION</div>
<div class="t" style="left:292.00px;top:625.83px;font-size:5.40px;line-height:7px;color:#f2f2f2;font-weight:bold;transform:scaleX(0.980);transform-origin:0 50%;white-space:nowrap;">AS PERF CTRL</div>
<div style="position:absolute;left:342.00px;top:619.00px;width:59.50px;height:13.80px;border-radius:2px;background:#8b8b8b;box-shadow:inset 0 1px 1px rgba(0,0,0,.250);"></div>
<div style="position:absolute;left:345.00px;top:621.20px;width:8.50px;height:8.50px;box-sizing:border-box;border:1px solid #4a4a4a;border-radius:1.500px;background:linear-gradient(135deg,#f8f8f4,#dcdcd4);box-shadow:0 .5px .5px rgba(0,0,0,.3);"></div>
<div class="t" style="left:356.00px;top:620.03px;font-size:5.40px;line-height:7px;color:#f2f2f2;font-weight:bold;transform:scaleX(0.978);transform-origin:0 50%;white-space:nowrap;">QUANTIZE</div>
<div class="t" style="left:356.00px;top:625.83px;font-size:5.40px;line-height:7px;color:#f2f2f2;font-weight:bold;transform:scaleX(0.994);transform-origin:0 50%;white-space:nowrap;">DURING REC</div>
<svg style="position:absolute;left:401px;top:596px" width="34" height="10" viewBox="401 596 34 10"><path d="M402 598.500H432.500V605M414 598.500V605" fill="none" stroke="#8c8c8c" stroke-width="1"/></svg>
<div style="position:absolute;left:407.00px;top:604.50px;width:14.20px;height:14.20px;box-sizing:border-box;border:1.700px solid #2c2c2c;border-radius:3.500px;background:radial-gradient(ellipse at 50% 40%,#ffffff 0,#efefea 55%,#d6d6ce 100%);box-shadow:0 1px 1px rgba(0,0,0,.3);"><svg style="position:absolute;left:0;top:0" width="12" height="12" viewBox="0 0 12 12"><path d="M5.800 2.500v6.800M2.400 5.900h6.800" stroke="#6a6a6a" stroke-width="1.700"/></svg></div>
<div style="position:absolute;left:425.50px;top:604.50px;width:14.20px;height:14.20px;box-sizing:border-box;border:1.700px solid #2c2c2c;border-radius:3.500px;background:radial-gradient(ellipse at 50% 40%,#ffffff 0,#efefea 55%,#d6d6ce 100%);box-shadow:0 1px 1px rgba(0,0,0,.3);"><svg style="position:absolute;left:0;top:0" width="12" height="12" viewBox="0 0 12 12"><path d="M2.600 9.300L9 2.500" stroke="#6a6a6a" stroke-width="1.500"/></svg></div>
<div class="t" style="left:409.00px;top:620.03px;font-size:5.40px;line-height:7px;color:#5c5c5c;font-weight:bold;transform:scaleX(0.873);transform-origin:0 50%;white-space:nowrap;">NEW</div>
<div class="t" style="left:409.00px;top:625.83px;font-size:5.40px;line-height:7px;color:#5c5c5c;font-weight:bold;transform:scaleX(0.940);transform-origin:0 50%;white-space:nowrap;">DUB</div>
<div class="t" style="left:427.00px;top:620.03px;font-size:5.40px;line-height:7px;color:#5c5c5c;font-weight:bold;transform:scaleX(0.913);transform-origin:0 50%;white-space:nowrap;">NEW</div>
<div class="t" style="left:427.00px;top:625.83px;font-size:5.40px;line-height:7px;color:#5c5c5c;font-weight:bold;transform:scaleX(1.040);transform-origin:0 50%;white-space:nowrap;">ALT</div>
<div style="position:absolute;left:442.00px;top:592.00px;width:1.00px;height:42.00px;background:#acacac;"></div><div style="position:absolute;left:443.00px;top:592.00px;width:1.00px;height:42.00px;background:#e6e6e6;"></div>
<div style="position:absolute;left:445.50px;top:593.50px;width:9.00px;height:9.00px;box-sizing:border-box;border:1px solid #86b428;border-radius:1.500px;background:radial-gradient(circle,#c8f060 0,#a4dc30 60%,#98d028 100%);box-shadow:0 0 1.500px rgba(160,220,40,.8);"></div>
<div class="t" style="left:457.00px;top:594.96px;font-size:5.60px;line-height:7px;color:#5c5c5c;font-weight:bold;transform:scaleX(0.962);transform-origin:0 50%;white-space:nowrap;">LOOP ON/OFF</div>
<div style="position:absolute;left:446.00px;top:605.50px;width:75.00px;height:11.00px;box-sizing:border-box;border:1px solid #0c0c0c;background:linear-gradient(#1f3612 0,#36561f 28%,#33531e 100%);box-shadow:0 .5px 0 rgba(255,255,255,.5);"></div><div class="t" style="left:463.60px;top:606.56px;font-size:7.62px;line-height:10px;color:#d6de48;font-weight:bold;font-family:'Liberation Mono',monospace;white-space:pre;letter-spacing:0;">9. 1. 1.  0</div>
<div style="position:absolute;left:521.50px;top:605.00px;width:8.00px;height:12.00px;box-sizing:border-box;border:1px solid #2a2a2a;border-radius:1.500px;background:linear-gradient(#f4f4f4,#cfcfcf 48%,#8a8a8a 50%,#ececec 54%,#d8d8d8);"><svg style="position:absolute;left:0;top:0" width="6" height="10" viewBox="0 0 6 9.500"><path d="M3 1.300L4.900 3.700H1.100zM3 8.300L1.100 5.900h3.800z" fill="#909090"/></svg></div>
<div style="position:absolute;left:446.00px;top:620.50px;width:75.00px;height:11.00px;box-sizing:border-box;border:1px solid #0c0c0c;background:linear-gradient(#1f3612 0,#36561f 28%,#33531e 100%);box-shadow:0 .5px 0 rgba(255,255,255,.5);"></div><div class="t" style="left:459.00px;top:621.56px;font-size:7.62px;line-height:10px;color:#d6de48;font-weight:bold;font-family:'Liberation Mono',monospace;white-space:pre;letter-spacing:0;">17. 1. 1.  0</div>
<div style="position:absolute;left:521.50px;top:620.00px;width:8.00px;height:12.00px;box-sizing:border-box;border:1px solid #2a2a2a;border-radius:1.500px;background:linear-gradient(#f4f4f4,#cfcfcf 48%,#8a8a8a 50%,#ececec 54%,#d8d8d8);"><svg style="position:absolute;left:0;top:0" width="6" height="10" viewBox="0 0 6 9.500"><path d="M3 1.300L4.900 3.700H1.100zM3 8.300L1.100 5.900h3.800z" fill="#909090"/></svg></div>
<div style="position:absolute;left:532.00px;top:605.00px;width:10.50px;height:11.80px;box-sizing:border-box;border:1px solid #555;border-radius:1.500px;background:linear-gradient(135deg,#f4f4f0,#d8d8d2);"><div style="position:absolute;left:0;right:0;top:0;text-align:center;font-size:7.500px;line-height:9.800px;font-weight:bold;color:#8a8a8a;">L</div></div>
<div style="position:absolute;left:532.00px;top:620.00px;width:10.50px;height:11.80px;box-sizing:border-box;border:1px solid #555;border-radius:1.500px;background:linear-gradient(135deg,#f4f4f0,#d8d8d2);"><div style="position:absolute;left:0;right:0;top:0;text-align:center;font-size:7.500px;line-height:9.800px;font-weight:bold;color:#8a8a8a;">R</div></div>
<div style="position:absolute;left:545.00px;top:592.00px;width:1.00px;height:42.00px;background:#acacac;"></div><div style="position:absolute;left:546.00px;top:592.00px;width:1.00px;height:42.00px;background:#e6e6e6;"></div>
<div style="position:absolute;left:551.00px;top:594.00px;width:21.50px;height:21.50px;box-sizing:border-box;border:1.700px solid #2c2c2c;border-radius:3.500px;background:radial-gradient(ellipse at 50% 40%,#ffffff 0,#efefea 55%,#d6d6ce 100%);box-shadow:0 1px 1px rgba(0,0,0,.3);"><svg style="position:absolute;left:0;top:0" width="19" height="19" viewBox="0 0 19 19"><path d="M13.300 6A5 5 0 1 0 14.200 9.800H9.600" fill="none" stroke="#7a7a7a" stroke-width="2.200"/></svg></div>
<div class="t" style="left:547.00px;top:619.03px;font-size:5.40px;line-height:7px;color:#5c5c5c;font-weight:bold;transform:scaleX(0.929);transform-origin:0 50%;white-space:nowrap;">REGROOVE</div>
<div class="t" style="left:554.00px;top:624.93px;font-size:5.40px;line-height:7px;color:#5c5c5c;font-weight:bold;transform:scaleX(0.936);transform-origin:0 50%;white-space:nowrap;">MIXER</div>
<div style="position:absolute;left:577.00px;top:592.00px;width:1.00px;height:42.00px;background:#acacac;"></div><div style="position:absolute;left:578.00px;top:592.00px;width:1.00px;height:42.00px;background:#e6e6e6;"></div>
<div style="position:absolute;left:581.00px;top:594.00px;width:42.50px;height:38.50px;border-radius:2px;background:#8b8b8b;box-shadow:inset 0 1px 1px rgba(0,0,0,.250);"></div>
<div class="t" style="left:584.00px;top:594.93px;font-size:5.40px;line-height:7px;color:#f2f2f2;font-weight:bold;transform:scaleX(0.997);transform-origin:0 50%;white-space:nowrap;">AUTOMATION</div>
<div class="t" style="left:584.00px;top:600.93px;font-size:5.40px;line-height:7px;color:#f2f2f2;font-weight:bold;transform:scaleX(0.957);transform-origin:0 50%;white-space:nowrap;">OVERRIDE</div>
<svg style="position:absolute;left:596px;top:601px" width="26" height="14" viewBox="596 601 26 14"><path d="M613 603.500h7v9.500H598" fill="none" stroke="#e8e8e8" stroke-width=".9"/></svg>
<div style="position:absolute;left:584.00px;top:611.20px;width:10.50px;height:4.00px;box-sizing:border-box;border:1px solid #4a3e3e;background:#907070;"></div>
<div style="position:absolute;left:584.50px;top:621.00px;width:8.50px;height:8.50px;box-sizing:border-box;border:1px solid #4a4a4a;border-radius:1.500px;background:linear-gradient(135deg,#f8f8f4,#dcdcd4);box-shadow:0 .5px .5px rgba(0,0,0,.3);"></div>
<div class="t" style="left:594.50px;top:622.13px;font-size:5.40px;line-height:7px;color:#f2f2f2;font-weight:bold;transform:scaleX(0.805);transform-origin:0 50%;white-space:nowrap;">RESET</div>
<div style="position:absolute;left:1012.00px;top:623.00px;width:12.00px;height:12.00px;background:#f4f4f4;"></div>
<svg style="position:absolute;left:1012px;top:623px" width="12" height="12" viewBox="0 0 12 12"><path d="M2 12L12 2M5.500 12L12 5.500M9 12l3-3" stroke="#8a8a8a" stroke-width=".9"/></svg>
<div style="position:absolute;left:-7.00px;top:586.50px;width:12.50px;height:12.50px;border-radius:50%;background:#f0f0f0;"></div>
</div></body></html>
